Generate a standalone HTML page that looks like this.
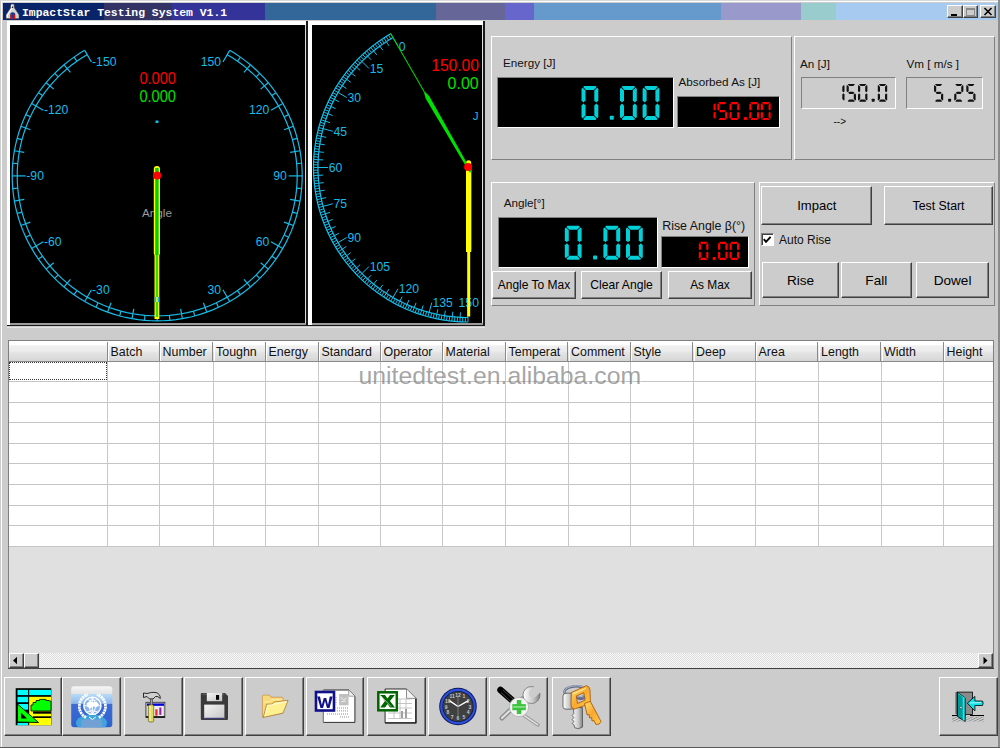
<!DOCTYPE html><html><head><meta charset="utf-8"><style>
html,body{margin:0;padding:0;width:1000px;height:748px;overflow:hidden;background:#cccccc;}
body{position:relative;font-family:"Liberation Sans",sans-serif;}
.a{position:absolute;}
.t{font-size:11.7px;color:#000;white-space:pre;line-height:1;}
</style></head><body>
<div class="a" style="left:0px;top:0px;width:1000px;height:748px;background:#cccccc;"></div>
<div class="a" style="left:0px;top:0px;width:1000px;height:1px;background:#d8d8d8;"></div>
<div class="a" style="left:1px;top:1px;width:998px;height:1px;background:#ffffff;"></div>
<div class="a" style="left:1px;top:1px;width:1px;height:746px;background:#ffffff;"></div>
<div class="a" style="left:998.4px;top:0px;width:1.6px;height:748px;background:#8c8c8c;"></div>
<div class="a" style="left:0px;top:746.6px;width:1000px;height:1.4px;background:#5a5a5a;"></div>
<div class="a" style="left:3px;top:3px;width:101px;height:17.3px;background:#0a246a;"></div>
<div class="a" style="left:104px;top:3px;width:68px;height:17.3px;background:#333366;"></div>
<div class="a" style="left:172px;top:3px;width:93px;height:17.3px;background:#333399;"></div>
<div class="a" style="left:265px;top:3px;width:171px;height:17.3px;background:#336699;"></div>
<div class="a" style="left:436px;top:3px;width:69px;height:17.3px;background:#666699;"></div>
<div class="a" style="left:505px;top:3px;width:29px;height:17.3px;background:#6666cc;"></div>
<div class="a" style="left:534px;top:3px;width:187px;height:17.3px;background:#6699cc;"></div>
<div class="a" style="left:721px;top:3px;width:80px;height:17.3px;background:#9999cc;"></div>
<div class="a" style="left:801px;top:3px;width:35px;height:17.3px;background:#99cccc;"></div>
<div class="a" style="left:836px;top:3px;width:162px;height:17.3px;background:#a6caf0;"></div>
<div class="a t" style="left:22px;top:6.2px;font-family:'Liberation Mono',monospace;font-weight:bold;font-size:11.4px;color:#fff;line-height:14px;">ImpactStar Testing System V1.1</div>
<svg class="a" style="left:0;top:0" width="30" height="22">
<path d="M11 4 L14 4 L14.5 8 L19 14.8 L19 18.6 L6 18.6 L6 14.8 L10.5 8 Z" fill="#d6d6d6" stroke="#404040" stroke-width="0.5"/>
<path d="M11.5 5 L11.8 8.5 L7.5 15 L7.5 17.5" fill="none" stroke="#ffffff" stroke-width="1"/>
<circle cx="12.5" cy="7.3" r="0.8" fill="#111"/>
<path d="M10.3 18.6 L10.3 13.5 Q12.7 10.8 15.2 13.5 L15.2 18.6 Z" fill="#1b3b8a"/>
<rect x="10.4" y="14.6" width="1.6" height="4.6" fill="#ee0000"/><rect x="13.5" y="14.6" width="1.6" height="4.6" fill="#ee0000"/>
<path d="M8 16 L9.8 16 M15.8 16 L17.5 16" stroke="#90d0d0" stroke-width="0.8"/>
</svg>
<div class="a" style="left:947px;top:5px;width:15.5px;height:13.3px;background:#cccccc;box-sizing:border-box;border-top:1px solid #fff;border-left:1px solid #fff;border-right:1px solid #404040;border-bottom:1px solid #404040;box-shadow:inset -1px -1px 0 #808080;"></div>
<div class="a" style="left:951px;top:13.5px;width:6px;height:2px;background:#000"></div>
<div class="a" style="left:962.8px;top:5px;width:15.3px;height:13.3px;background:#cccccc;box-sizing:border-box;border-top:1px solid #fff;border-left:1px solid #fff;border-right:1px solid #404040;border-bottom:1px solid #404040;box-shadow:inset -1px -1px 0 #808080;"></div>
<div class="a" style="left:966px;top:7.5px;width:9px;height:8px;box-sizing:border-box;border:1px solid #8a8a8a;border-top-width:2px;"></div>
<div class="a" style="left:980.2px;top:5px;width:15.6px;height:13.3px;background:#cccccc;box-sizing:border-box;border-top:1px solid #fff;border-left:1px solid #fff;border-right:1px solid #404040;border-bottom:1px solid #404040;box-shadow:inset -1px -1px 0 #808080;"></div>
<svg class="a" style="left:983px;top:7px" width="10" height="9"><path d="M1.5 1l7 7M8.5 1l-7 7" stroke="#000" stroke-width="1.6"/></svg>
<div class="a" style="left:7px;top:21px;width:301px;height:305px;background:#fff;"></div>
<div class="a" style="left:306px;top:21px;width:1.6px;height:305px;background:#1a1a1a;"></div>
<div class="a" style="left:7px;top:324.6px;width:301px;height:1.2px;background:#1a1a1a;"></div>
<div class="a" style="left:10px;top:25px;width:295px;height:298px;background:#000;"></div>
<div class="a" style="left:10px;top:323px;width:296px;height:1.6px;background:#9a9a9a;"></div>
<div class="a" style="left:305px;top:25px;width:1px;height:298px;background:#d8d8d8;"></div>
<div class="a" style="left:307.8px;top:21px;width:177px;height:305px;background:#fff;"></div>
<div class="a" style="left:312px;top:25px;width:170px;height:298px;background:#000;"></div>
<div class="a" style="left:482px;top:25px;width:1px;height:298px;background:#e0e0e0;"></div>
<div class="a" style="left:483px;top:21px;width:1.8px;height:305px;background:#1a1a1a;"></div>
<div class="a" style="left:312px;top:323px;width:171px;height:1.6px;background:#9a9a9a;"></div>
<div class="a" style="left:307.8px;top:324.6px;width:177px;height:1.2px;background:#1a1a1a;"></div>
<div class="a" style="left:7px;top:326.6px;width:478px;height:1.4px;background:#e4e4e4;"></div>
<svg class="a" style="left:0;top:0" width="1000" height="748"><clipPath id="c1"><rect x="10" y="25" width="295" height="298"/></clipPath><g clip-path="url(#c1)"><path d="M84.70,50.33 L79.29,53.61 L74.03,57.12 L68.93,60.86 L64.00,64.82 L59.24,68.99 L54.67,73.37 L50.29,77.94 L46.12,82.70 L42.16,87.63 L38.42,92.73 L34.91,97.99 L31.63,103.40 L28.58,108.95 L25.79,114.62 L23.24,120.41 L20.94,126.31 L18.91,132.30 L17.14,138.37 L15.64,144.52 L14.40,150.72 L13.44,156.97 L12.75,163.26 L12.34,169.58 L12.20,175.90 L12.34,182.22 L12.75,188.54 L13.44,194.83 L14.40,201.08 L15.64,207.28 L17.14,213.43 L18.91,219.50 L20.94,225.49 L23.24,231.39 L25.79,237.18 L28.58,242.85 L31.63,248.40 L34.91,253.81 L38.42,259.07 L42.16,264.17 L46.12,269.10 L50.29,273.86 L54.67,278.43 L59.24,282.81 L64.00,286.98 L68.93,290.94 L74.03,294.68 L79.29,298.19 L84.70,301.47 L90.25,304.52 L95.92,307.31 L101.71,309.86 L107.61,312.16 L113.60,314.19 L119.67,315.96 L125.82,317.46 L132.02,318.70 L138.27,319.66 L144.56,320.35 L150.88,320.76 L157.20,320.90 L163.52,320.76 L169.84,320.35 L176.13,319.66 L182.38,318.70 L188.58,317.46 L194.73,315.96 L200.80,314.19 L206.79,312.16 L212.69,309.86 L218.48,307.31 L224.15,304.52 L229.70,301.47 L235.11,298.19 L240.37,294.68 L245.47,290.94 L250.40,286.98 L255.16,282.81 L259.73,278.43 L264.11,273.86 L268.28,269.10 L272.24,264.17 L275.98,259.07 L279.49,253.81 L282.77,248.40 L285.82,242.85 L288.61,237.18 L291.16,231.39 L293.46,225.49 L295.49,219.50 L297.26,213.43 L298.76,207.28 L300.00,201.08 L300.96,194.83 L301.65,188.54 L302.06,182.22 L302.20,175.90 L302.06,169.58 L301.65,163.26 L300.96,156.97 L300.00,150.72 L298.76,144.52 L297.26,138.37 L295.49,132.30 L293.46,126.31 L291.16,120.41 L288.61,114.62 L285.82,108.95 L282.77,103.40 L279.49,97.99 L275.98,92.73 L272.24,87.63 L268.28,82.70 L264.11,77.94 L259.73,73.37 L255.16,68.99 L250.40,64.82 L245.47,60.86 L240.37,57.12 L235.11,53.61 L229.70,50.33" fill="none" stroke="#16bce8" stroke-width="1.2"/><path d="M87.20,54.66 L81.98,57.83 L76.90,61.22 L71.97,64.83 L67.21,68.65 L62.62,72.68 L58.21,76.91 L53.98,81.32 L49.95,85.91 L46.13,90.67 L42.52,95.60 L39.13,100.68 L35.96,105.90 L33.02,111.26 L30.32,116.73 L27.86,122.32 L25.64,128.02 L23.68,133.80 L21.97,139.67 L20.52,145.60 L19.33,151.59 L18.40,157.63 L17.73,163.70 L17.33,169.79 L17.20,175.90 L17.33,182.01 L17.73,188.10 L18.40,194.17 L19.33,200.21 L20.52,206.20 L21.97,212.13 L23.68,218.00 L25.64,223.78 L27.86,229.48 L30.32,235.07 L33.02,240.54 L35.96,245.90 L39.13,251.12 L42.52,256.20 L46.13,261.13 L49.95,265.89 L53.98,270.48 L58.21,274.89 L62.62,279.12 L67.21,283.15 L71.97,286.97 L76.90,290.58 L81.98,293.97 L87.20,297.14 L92.56,300.08 L98.03,302.78 L103.62,305.24 L109.32,307.46 L115.10,309.42 L120.97,311.13 L126.90,312.58 L132.89,313.77 L138.93,314.70 L145.00,315.37 L151.09,315.77 L157.20,315.90 L163.31,315.77 L169.40,315.37 L175.47,314.70 L181.51,313.77 L187.50,312.58 L193.43,311.13 L199.30,309.42 L205.08,307.46 L210.78,305.24 L216.37,302.78 L221.84,300.08 L227.20,297.14 L232.42,293.97 L237.50,290.58 L242.43,286.97 L247.19,283.15 L251.78,279.12 L256.19,274.89 L260.42,270.48 L264.45,265.89 L268.27,261.13 L271.88,256.20 L275.27,251.12 L278.44,245.90 L281.38,240.54 L284.08,235.07 L286.54,229.48 L288.76,223.78 L290.72,218.00 L292.43,212.13 L293.88,206.20 L295.07,200.21 L296.00,194.17 L296.67,188.10 L297.07,182.01 L297.20,175.90 L297.07,169.79 L296.67,163.70 L296.00,157.63 L295.07,151.59 L293.88,145.60 L292.43,139.67 L290.72,133.80 L288.76,128.02 L286.54,122.32 L284.08,116.73 L281.38,111.26 L278.44,105.90 L275.27,100.68 L271.88,95.60 L268.27,90.67 L264.45,85.91 L260.42,81.32 L256.19,76.91 L251.78,72.68 L247.19,68.65 L242.43,64.83 L237.50,61.22 L232.42,57.83 L227.20,54.66" fill="none" stroke="#16bce8" stroke-width="1.2"/><line x1="84.70" y1="50.33" x2="91.45" y2="62.02" stroke="#16bce8" stroke-width="1.2"/><text x="92.05" y="66.02" font-size="12.2" fill="#16bce8" font-family="Liberation Sans">-150</text><line x1="74.03" y1="57.12" x2="76.90" y2="61.22" stroke="#16bce8" stroke-width="1.2"/><line x1="64.00" y1="64.82" x2="70.42" y2="72.48" stroke="#16bce8" stroke-width="1.2"/><line x1="54.67" y1="73.37" x2="58.21" y2="76.91" stroke="#16bce8" stroke-width="1.2"/><line x1="46.12" y1="82.70" x2="53.78" y2="89.12" stroke="#16bce8" stroke-width="1.2"/><line x1="38.42" y1="92.73" x2="42.52" y2="95.60" stroke="#16bce8" stroke-width="1.2"/><line x1="31.63" y1="103.40" x2="43.32" y2="110.15" stroke="#16bce8" stroke-width="1.2"/><text x="43.92" y="114.15" font-size="12.2" fill="#16bce8" font-family="Liberation Sans">-120</text><line x1="25.79" y1="114.62" x2="30.32" y2="116.73" stroke="#16bce8" stroke-width="1.2"/><line x1="20.94" y1="126.31" x2="30.34" y2="129.73" stroke="#16bce8" stroke-width="1.2"/><line x1="17.14" y1="138.37" x2="21.97" y2="139.67" stroke="#16bce8" stroke-width="1.2"/><line x1="14.40" y1="150.72" x2="24.25" y2="152.46" stroke="#16bce8" stroke-width="1.2"/><line x1="12.75" y1="163.26" x2="17.73" y2="163.70" stroke="#16bce8" stroke-width="1.2"/><line x1="12.20" y1="175.90" x2="25.70" y2="175.90" stroke="#16bce8" stroke-width="1.2"/><text x="26.30" y="179.90" font-size="12.2" fill="#16bce8" font-family="Liberation Sans">-90</text><line x1="12.75" y1="188.54" x2="17.73" y2="188.10" stroke="#16bce8" stroke-width="1.2"/><line x1="14.40" y1="201.08" x2="24.25" y2="199.34" stroke="#16bce8" stroke-width="1.2"/><line x1="17.14" y1="213.43" x2="21.97" y2="212.13" stroke="#16bce8" stroke-width="1.2"/><line x1="20.94" y1="225.49" x2="30.34" y2="222.07" stroke="#16bce8" stroke-width="1.2"/><line x1="25.79" y1="237.18" x2="30.32" y2="235.07" stroke="#16bce8" stroke-width="1.2"/><line x1="31.63" y1="248.40" x2="43.32" y2="241.65" stroke="#16bce8" stroke-width="1.2"/><text x="43.92" y="245.65" font-size="12.2" fill="#16bce8" font-family="Liberation Sans">-60</text><line x1="38.42" y1="259.07" x2="42.52" y2="256.20" stroke="#16bce8" stroke-width="1.2"/><line x1="46.12" y1="269.10" x2="53.78" y2="262.68" stroke="#16bce8" stroke-width="1.2"/><line x1="54.67" y1="278.43" x2="58.21" y2="274.89" stroke="#16bce8" stroke-width="1.2"/><line x1="64.00" y1="286.98" x2="70.42" y2="279.32" stroke="#16bce8" stroke-width="1.2"/><line x1="74.03" y1="294.68" x2="76.90" y2="290.58" stroke="#16bce8" stroke-width="1.2"/><line x1="84.70" y1="301.47" x2="91.45" y2="289.78" stroke="#16bce8" stroke-width="1.2"/><text x="92.05" y="293.78" font-size="12.2" fill="#16bce8" font-family="Liberation Sans">-30</text><line x1="95.92" y1="307.31" x2="98.03" y2="302.78" stroke="#16bce8" stroke-width="1.2"/><line x1="107.61" y1="312.16" x2="111.03" y2="302.76" stroke="#16bce8" stroke-width="1.2"/><line x1="119.67" y1="315.96" x2="120.97" y2="311.13" stroke="#16bce8" stroke-width="1.2"/><line x1="132.02" y1="318.70" x2="133.76" y2="308.85" stroke="#16bce8" stroke-width="1.2"/><line x1="144.56" y1="320.35" x2="145.00" y2="315.37" stroke="#16bce8" stroke-width="1.2"/><line x1="157.20" y1="320.90" x2="157.20" y2="307.40" stroke="#16bce8" stroke-width="1.2"/><line x1="169.84" y1="320.35" x2="169.40" y2="315.37" stroke="#16bce8" stroke-width="1.2"/><line x1="182.38" y1="318.70" x2="180.64" y2="308.85" stroke="#16bce8" stroke-width="1.2"/><line x1="194.73" y1="315.96" x2="193.43" y2="311.13" stroke="#16bce8" stroke-width="1.2"/><line x1="206.79" y1="312.16" x2="203.37" y2="302.76" stroke="#16bce8" stroke-width="1.2"/><line x1="218.48" y1="307.31" x2="216.37" y2="302.78" stroke="#16bce8" stroke-width="1.2"/><line x1="229.70" y1="301.47" x2="222.95" y2="289.78" stroke="#16bce8" stroke-width="1.2"/><text x="221.15" y="293.78" font-size="12.2" fill="#16bce8" font-family="Liberation Sans" text-anchor="end">30</text><line x1="240.37" y1="294.68" x2="237.50" y2="290.58" stroke="#16bce8" stroke-width="1.2"/><line x1="250.40" y1="286.98" x2="243.98" y2="279.32" stroke="#16bce8" stroke-width="1.2"/><line x1="259.73" y1="278.43" x2="256.19" y2="274.89" stroke="#16bce8" stroke-width="1.2"/><line x1="268.28" y1="269.10" x2="260.62" y2="262.68" stroke="#16bce8" stroke-width="1.2"/><line x1="275.98" y1="259.07" x2="271.88" y2="256.20" stroke="#16bce8" stroke-width="1.2"/><line x1="282.77" y1="248.40" x2="271.08" y2="241.65" stroke="#16bce8" stroke-width="1.2"/><text x="269.28" y="245.65" font-size="12.2" fill="#16bce8" font-family="Liberation Sans" text-anchor="end">60</text><line x1="288.61" y1="237.18" x2="284.08" y2="235.07" stroke="#16bce8" stroke-width="1.2"/><line x1="293.46" y1="225.49" x2="284.06" y2="222.07" stroke="#16bce8" stroke-width="1.2"/><line x1="297.26" y1="213.43" x2="292.43" y2="212.13" stroke="#16bce8" stroke-width="1.2"/><line x1="300.00" y1="201.08" x2="290.15" y2="199.34" stroke="#16bce8" stroke-width="1.2"/><line x1="301.65" y1="188.54" x2="296.67" y2="188.10" stroke="#16bce8" stroke-width="1.2"/><line x1="302.20" y1="175.90" x2="288.70" y2="175.90" stroke="#16bce8" stroke-width="1.2"/><text x="286.90" y="179.90" font-size="12.2" fill="#16bce8" font-family="Liberation Sans" text-anchor="end">90</text><line x1="301.65" y1="163.26" x2="296.67" y2="163.70" stroke="#16bce8" stroke-width="1.2"/><line x1="300.00" y1="150.72" x2="290.15" y2="152.46" stroke="#16bce8" stroke-width="1.2"/><line x1="297.26" y1="138.37" x2="292.43" y2="139.67" stroke="#16bce8" stroke-width="1.2"/><line x1="293.46" y1="126.31" x2="284.06" y2="129.73" stroke="#16bce8" stroke-width="1.2"/><line x1="288.61" y1="114.62" x2="284.08" y2="116.73" stroke="#16bce8" stroke-width="1.2"/><line x1="282.77" y1="103.40" x2="271.08" y2="110.15" stroke="#16bce8" stroke-width="1.2"/><text x="269.28" y="114.15" font-size="12.2" fill="#16bce8" font-family="Liberation Sans" text-anchor="end">120</text><line x1="275.98" y1="92.73" x2="271.88" y2="95.60" stroke="#16bce8" stroke-width="1.2"/><line x1="268.28" y1="82.70" x2="260.62" y2="89.12" stroke="#16bce8" stroke-width="1.2"/><line x1="259.73" y1="73.37" x2="256.19" y2="76.91" stroke="#16bce8" stroke-width="1.2"/><line x1="250.40" y1="64.82" x2="243.98" y2="72.48" stroke="#16bce8" stroke-width="1.2"/><line x1="240.37" y1="57.12" x2="237.50" y2="61.22" stroke="#16bce8" stroke-width="1.2"/><line x1="229.70" y1="50.33" x2="222.95" y2="62.02" stroke="#16bce8" stroke-width="1.2"/><text x="221.15" y="66.02" font-size="12.2" fill="#16bce8" font-family="Liberation Sans" text-anchor="end">150</text><text x="139.4" y="84" font-size="15.6" fill="#ff0000" font-family="Liberation Sans" textLength="36.5" lengthAdjust="spacingAndGlyphs">0.000</text><text x="139.4" y="102" font-size="15.6" fill="#00e000" font-family="Liberation Sans" textLength="36.5" lengthAdjust="spacingAndGlyphs">0.000</text><rect x="155.5" y="120.5" width="3" height="2.5" fill="#16bce8"/><text x="157" y="217" font-size="11.7" fill="#9a9a9a" font-family="Liberation Sans" text-anchor="middle">Angle</text><rect x="153.8" y="166" width="6.2" height="90" rx="3" fill="#ffff00"/><rect x="155.2" y="168" width="3.4" height="88" fill="#00cc00"/><rect x="154.5" y="255" width="4.8" height="64" fill="#ffff00"/><rect x="155.7" y="255" width="2.4" height="62" fill="#33dd00"/><rect x="154.5" y="297" width="4.8" height="5" fill="#16bce8"/><rect x="156.2" y="297" width="1.4" height="5" fill="#ffff00"/><circle cx="157.2" cy="175.6" r="4" fill="#ff0000"/></g></svg>
<svg class="a" style="left:0;top:0" width="1000" height="748"><clipPath id="c2"><rect x="312" y="25" width="170" height="298"/></clipPath><g clip-path="url(#c2)"><path d="M390.75,33.70 L388.43,35.07 L386.13,36.48 L383.85,37.93 L381.60,39.41 L379.38,40.94 L377.19,42.51 L375.02,44.11 L372.88,45.75 L370.77,47.43 L368.69,49.15 L366.64,50.90 L364.62,52.68 L362.63,54.51 L360.68,56.36 L358.75,58.25 L356.86,60.18 L355.01,62.13 L353.18,64.12 L351.40,66.14 L349.65,68.19 L347.93,70.27 L346.25,72.38 L344.61,74.52 L343.01,76.69 L341.44,78.88 L339.91,81.10 L338.43,83.35 L336.98,85.63 L335.57,87.93 L334.20,90.25 L332.87,92.60 L331.58,94.97 L330.34,97.36 L329.14,99.77 L327.98,102.21 L326.86,104.66 L325.78,107.13 L324.75,109.62 L323.76,112.13 L322.82,114.66 L321.92,117.20 L321.06,119.76 L320.25,122.33 L319.49,124.91 L318.76,127.51 L318.09,130.12 L317.46,132.75 L316.88,135.38 L316.34,138.02 L315.85,140.67 L315.40,143.33 L315.00,146.00 L314.65,148.67 L314.35,151.35 L314.09,154.03 L313.88,156.72 L313.71,159.41 L313.59,162.11 L313.52,164.80 L313.50,167.50 L313.52,170.20 L313.59,172.89 L313.71,175.59 L313.88,178.28 L314.09,180.97 L314.35,183.65 L314.65,186.33 L315.00,189.00 L315.40,191.67 L315.85,194.33 L316.34,196.98 L316.88,199.62 L317.46,202.25 L318.09,204.88 L318.76,207.49 L319.49,210.09 L320.25,212.67 L321.06,215.24 L321.92,217.80 L322.82,220.34 L323.76,222.87 L324.75,225.38 L325.78,227.87 L326.86,230.34 L327.98,232.79 L329.14,235.23 L330.34,237.64 L331.58,240.03 L332.87,242.40 L334.20,244.75 L335.57,247.07 L336.98,249.37 L338.43,251.65 L339.91,253.90 L341.44,256.12 L343.01,258.31 L344.61,260.48 L346.25,262.62 L347.93,264.73 L349.65,266.81 L351.40,268.86 L353.18,270.88 L355.01,272.87 L356.86,274.82 L358.75,276.75 L360.68,278.64 L362.63,280.49 L364.62,282.32 L366.64,284.10 L368.69,285.85 L370.77,287.57 L372.88,289.25 L375.02,290.89 L377.19,292.49 L379.38,294.06 L381.60,295.59 L383.85,297.07 L386.13,298.52 L388.43,299.93 L390.75,301.30 L393.10,302.63 L395.47,303.92 L397.86,305.16 L400.27,306.36 L402.71,307.52 L405.16,308.64 L407.63,309.72 L410.12,310.75 L412.63,311.74 L415.16,312.68 L417.70,313.58 L420.26,314.44 L422.83,315.25 L425.41,316.01 L428.01,316.74 L430.62,317.41 L433.25,318.04 L435.88,318.62 L438.52,319.16 L441.17,319.65 L443.83,320.10 L446.50,320.50 L449.17,320.85 L451.85,321.15 L454.53,321.41 L457.22,321.62 L459.91,321.79 L462.61,321.91 L465.30,321.98 L468.00,322.00" fill="none" stroke="#16bce8" stroke-width="1.2"/><path d="M393.00,37.60 L390.74,38.92 L388.51,40.29 L386.30,41.70 L384.12,43.14 L381.96,44.63 L379.83,46.15 L377.73,47.70 L375.65,49.30 L373.60,50.93 L371.58,52.59 L369.59,54.29 L367.63,56.03 L365.70,57.80 L363.80,59.60 L361.93,61.43 L360.10,63.30 L358.30,65.20 L356.53,67.13 L354.79,69.09 L353.09,71.08 L351.43,73.10 L349.80,75.15 L348.20,77.23 L346.65,79.33 L345.13,81.46 L343.64,83.62 L342.20,85.80 L340.79,88.01 L339.42,90.24 L338.10,92.50 L336.81,94.78 L335.56,97.08 L334.35,99.40 L333.18,101.74 L332.05,104.11 L330.97,106.49 L329.92,108.89 L328.92,111.31 L327.96,113.74 L327.05,116.20 L326.17,118.66 L325.34,121.15 L324.55,123.64 L323.81,126.15 L323.11,128.68 L322.46,131.21 L321.84,133.76 L321.28,136.31 L320.76,138.88 L320.28,141.45 L319.85,144.03 L319.46,146.62 L319.12,149.22 L318.82,151.82 L318.57,154.43 L318.37,157.04 L318.21,159.65 L318.09,162.27 L318.02,164.88 L318.00,167.50 L318.02,170.12 L318.09,172.73 L318.21,175.35 L318.37,177.96 L318.57,180.57 L318.82,183.18 L319.12,185.78 L319.46,188.38 L319.85,190.97 L320.28,193.55 L320.76,196.12 L321.28,198.69 L321.84,201.24 L322.46,203.79 L323.11,206.32 L323.81,208.85 L324.55,211.36 L325.34,213.85 L326.17,216.34 L327.05,218.80 L327.96,221.26 L328.92,223.69 L329.92,226.11 L330.97,228.51 L332.05,230.89 L333.18,233.26 L334.35,235.60 L335.56,237.92 L336.81,240.22 L338.10,242.50 L339.42,244.76 L340.79,246.99 L342.20,249.20 L343.64,251.38 L345.13,253.54 L346.65,255.67 L348.20,257.77 L349.80,259.85 L351.43,261.90 L353.09,263.92 L354.79,265.91 L356.53,267.87 L358.30,269.80 L360.10,271.70 L361.93,273.57 L363.80,275.40 L365.70,277.20 L367.63,278.97 L369.59,280.71 L371.58,282.41 L373.60,284.07 L375.65,285.70 L377.73,287.30 L379.83,288.85 L381.96,290.37 L384.12,291.86 L386.30,293.30 L388.51,294.71 L390.74,296.08 L393.00,297.40 L395.28,298.69 L397.58,299.94 L399.90,301.15 L402.24,302.32 L404.61,303.45 L406.99,304.53 L409.39,305.58 L411.81,306.58 L414.24,307.54 L416.70,308.45 L419.16,309.33 L421.65,310.16 L424.14,310.95 L426.65,311.69 L429.18,312.39 L431.71,313.04 L434.26,313.66 L436.81,314.22 L439.38,314.74 L441.95,315.22 L444.53,315.65 L447.12,316.04 L449.72,316.38 L452.32,316.68 L454.93,316.93 L457.54,317.13 L460.15,317.29 L462.77,317.41 L465.38,317.48 L468.00,317.50" fill="none" stroke="#16bce8" stroke-width="1.2"/><line x1="390.75" y1="33.70" x2="398.00" y2="46.26" stroke="#16bce8" stroke-width="1"/><text x="398.80" y="50.56" font-size="12.2" fill="#16bce8" font-family="Liberation Sans">0</text><line x1="388.43" y1="35.07" x2="390.74" y2="38.92" stroke="#16bce8" stroke-width="1"/><line x1="386.13" y1="36.48" x2="388.51" y2="40.29" stroke="#16bce8" stroke-width="1"/><line x1="383.85" y1="37.93" x2="389.03" y2="45.89" stroke="#16bce8" stroke-width="1"/><line x1="381.60" y1="39.41" x2="384.12" y2="43.14" stroke="#16bce8" stroke-width="1"/><line x1="379.38" y1="40.94" x2="381.96" y2="44.63" stroke="#16bce8" stroke-width="1"/><line x1="377.19" y1="42.51" x2="382.77" y2="50.19" stroke="#16bce8" stroke-width="1"/><line x1="375.02" y1="44.11" x2="377.73" y2="47.70" stroke="#16bce8" stroke-width="1"/><line x1="372.88" y1="45.75" x2="375.65" y2="49.30" stroke="#16bce8" stroke-width="1"/><line x1="370.77" y1="47.43" x2="376.75" y2="54.81" stroke="#16bce8" stroke-width="1"/><line x1="368.69" y1="49.15" x2="371.58" y2="52.59" stroke="#16bce8" stroke-width="1"/><line x1="366.64" y1="50.90" x2="369.59" y2="54.29" stroke="#16bce8" stroke-width="1"/><line x1="364.62" y1="52.68" x2="370.98" y2="59.74" stroke="#16bce8" stroke-width="1"/><line x1="362.63" y1="54.51" x2="365.70" y2="57.80" stroke="#16bce8" stroke-width="1"/><line x1="360.68" y1="56.36" x2="363.80" y2="59.60" stroke="#16bce8" stroke-width="1"/><line x1="358.75" y1="58.25" x2="369.01" y2="68.51" stroke="#16bce8" stroke-width="1"/><text x="369.81" y="72.81" font-size="12.2" fill="#16bce8" font-family="Liberation Sans">15</text><line x1="356.86" y1="60.18" x2="360.10" y2="63.30" stroke="#16bce8" stroke-width="1"/><line x1="355.01" y1="62.13" x2="358.30" y2="65.20" stroke="#16bce8" stroke-width="1"/><line x1="353.18" y1="64.12" x2="360.24" y2="70.48" stroke="#16bce8" stroke-width="1"/><line x1="351.40" y1="66.14" x2="354.79" y2="69.09" stroke="#16bce8" stroke-width="1"/><line x1="349.65" y1="68.19" x2="353.09" y2="71.08" stroke="#16bce8" stroke-width="1"/><line x1="347.93" y1="70.27" x2="355.31" y2="76.25" stroke="#16bce8" stroke-width="1"/><line x1="346.25" y1="72.38" x2="349.80" y2="75.15" stroke="#16bce8" stroke-width="1"/><line x1="344.61" y1="74.52" x2="348.20" y2="77.23" stroke="#16bce8" stroke-width="1"/><line x1="343.01" y1="76.69" x2="350.69" y2="82.27" stroke="#16bce8" stroke-width="1"/><line x1="341.44" y1="78.88" x2="345.13" y2="81.46" stroke="#16bce8" stroke-width="1"/><line x1="339.91" y1="81.10" x2="343.64" y2="83.62" stroke="#16bce8" stroke-width="1"/><line x1="338.43" y1="83.35" x2="346.39" y2="88.53" stroke="#16bce8" stroke-width="1"/><line x1="336.98" y1="85.63" x2="340.79" y2="88.01" stroke="#16bce8" stroke-width="1"/><line x1="335.57" y1="87.93" x2="339.42" y2="90.24" stroke="#16bce8" stroke-width="1"/><line x1="334.20" y1="90.25" x2="346.76" y2="97.50" stroke="#16bce8" stroke-width="1"/><text x="347.56" y="101.80" font-size="12.2" fill="#16bce8" font-family="Liberation Sans">30</text><line x1="332.87" y1="92.60" x2="336.81" y2="94.78" stroke="#16bce8" stroke-width="1"/><line x1="331.58" y1="94.97" x2="335.56" y2="97.08" stroke="#16bce8" stroke-width="1"/><line x1="330.34" y1="97.36" x2="338.80" y2="101.67" stroke="#16bce8" stroke-width="1"/><line x1="329.14" y1="99.77" x2="333.18" y2="101.74" stroke="#16bce8" stroke-width="1"/><line x1="327.98" y1="102.21" x2="332.05" y2="104.11" stroke="#16bce8" stroke-width="1"/><line x1="326.86" y1="104.66" x2="335.54" y2="108.52" stroke="#16bce8" stroke-width="1"/><line x1="325.78" y1="107.13" x2="329.92" y2="108.89" stroke="#16bce8" stroke-width="1"/><line x1="324.75" y1="109.62" x2="328.92" y2="111.31" stroke="#16bce8" stroke-width="1"/><line x1="323.76" y1="112.13" x2="332.63" y2="115.54" stroke="#16bce8" stroke-width="1"/><line x1="322.82" y1="114.66" x2="327.05" y2="116.20" stroke="#16bce8" stroke-width="1"/><line x1="321.92" y1="117.20" x2="326.17" y2="118.66" stroke="#16bce8" stroke-width="1"/><line x1="321.06" y1="119.76" x2="330.10" y2="122.69" stroke="#16bce8" stroke-width="1"/><line x1="320.25" y1="122.33" x2="324.55" y2="123.64" stroke="#16bce8" stroke-width="1"/><line x1="319.49" y1="124.91" x2="323.81" y2="126.15" stroke="#16bce8" stroke-width="1"/><line x1="318.76" y1="127.51" x2="332.77" y2="131.27" stroke="#16bce8" stroke-width="1"/><text x="333.57" y="135.57" font-size="12.2" fill="#16bce8" font-family="Liberation Sans">45</text><line x1="318.09" y1="130.12" x2="322.46" y2="131.21" stroke="#16bce8" stroke-width="1"/><line x1="317.46" y1="132.75" x2="321.84" y2="133.76" stroke="#16bce8" stroke-width="1"/><line x1="316.88" y1="135.38" x2="326.17" y2="137.35" stroke="#16bce8" stroke-width="1"/><line x1="316.34" y1="138.02" x2="320.76" y2="138.88" stroke="#16bce8" stroke-width="1"/><line x1="315.85" y1="140.67" x2="320.28" y2="141.45" stroke="#16bce8" stroke-width="1"/><line x1="315.40" y1="143.33" x2="324.79" y2="144.82" stroke="#16bce8" stroke-width="1"/><line x1="315.00" y1="146.00" x2="319.46" y2="146.62" stroke="#16bce8" stroke-width="1"/><line x1="314.65" y1="148.67" x2="319.12" y2="149.22" stroke="#16bce8" stroke-width="1"/><line x1="314.35" y1="151.35" x2="323.79" y2="152.34" stroke="#16bce8" stroke-width="1"/><line x1="314.09" y1="154.03" x2="318.57" y2="154.43" stroke="#16bce8" stroke-width="1"/><line x1="313.88" y1="156.72" x2="318.37" y2="157.04" stroke="#16bce8" stroke-width="1"/><line x1="313.71" y1="159.41" x2="323.20" y2="159.91" stroke="#16bce8" stroke-width="1"/><line x1="313.59" y1="162.11" x2="318.09" y2="162.27" stroke="#16bce8" stroke-width="1"/><line x1="313.52" y1="164.80" x2="318.02" y2="164.88" stroke="#16bce8" stroke-width="1"/><line x1="313.50" y1="167.50" x2="328.00" y2="167.50" stroke="#16bce8" stroke-width="1"/><text x="328.80" y="171.80" font-size="12.2" fill="#16bce8" font-family="Liberation Sans">60</text><line x1="313.52" y1="170.20" x2="318.02" y2="170.12" stroke="#16bce8" stroke-width="1"/><line x1="313.59" y1="172.89" x2="318.09" y2="172.73" stroke="#16bce8" stroke-width="1"/><line x1="313.71" y1="175.59" x2="323.20" y2="175.09" stroke="#16bce8" stroke-width="1"/><line x1="313.88" y1="178.28" x2="318.37" y2="177.96" stroke="#16bce8" stroke-width="1"/><line x1="314.09" y1="180.97" x2="318.57" y2="180.57" stroke="#16bce8" stroke-width="1"/><line x1="314.35" y1="183.65" x2="323.79" y2="182.66" stroke="#16bce8" stroke-width="1"/><line x1="314.65" y1="186.33" x2="319.12" y2="185.78" stroke="#16bce8" stroke-width="1"/><line x1="315.00" y1="189.00" x2="319.46" y2="188.38" stroke="#16bce8" stroke-width="1"/><line x1="315.40" y1="191.67" x2="324.79" y2="190.18" stroke="#16bce8" stroke-width="1"/><line x1="315.85" y1="194.33" x2="320.28" y2="193.55" stroke="#16bce8" stroke-width="1"/><line x1="316.34" y1="196.98" x2="320.76" y2="196.12" stroke="#16bce8" stroke-width="1"/><line x1="316.88" y1="199.62" x2="326.17" y2="197.65" stroke="#16bce8" stroke-width="1"/><line x1="317.46" y1="202.25" x2="321.84" y2="201.24" stroke="#16bce8" stroke-width="1"/><line x1="318.09" y1="204.88" x2="322.46" y2="203.79" stroke="#16bce8" stroke-width="1"/><line x1="318.76" y1="207.49" x2="332.77" y2="203.73" stroke="#16bce8" stroke-width="1"/><text x="333.57" y="208.03" font-size="12.2" fill="#16bce8" font-family="Liberation Sans">75</text><line x1="319.49" y1="210.09" x2="323.81" y2="208.85" stroke="#16bce8" stroke-width="1"/><line x1="320.25" y1="212.67" x2="324.55" y2="211.36" stroke="#16bce8" stroke-width="1"/><line x1="321.06" y1="215.24" x2="330.10" y2="212.31" stroke="#16bce8" stroke-width="1"/><line x1="321.92" y1="217.80" x2="326.17" y2="216.34" stroke="#16bce8" stroke-width="1"/><line x1="322.82" y1="220.34" x2="327.05" y2="218.80" stroke="#16bce8" stroke-width="1"/><line x1="323.76" y1="222.87" x2="332.63" y2="219.46" stroke="#16bce8" stroke-width="1"/><line x1="324.75" y1="225.38" x2="328.92" y2="223.69" stroke="#16bce8" stroke-width="1"/><line x1="325.78" y1="227.87" x2="329.92" y2="226.11" stroke="#16bce8" stroke-width="1"/><line x1="326.86" y1="230.34" x2="335.54" y2="226.48" stroke="#16bce8" stroke-width="1"/><line x1="327.98" y1="232.79" x2="332.05" y2="230.89" stroke="#16bce8" stroke-width="1"/><line x1="329.14" y1="235.23" x2="333.18" y2="233.26" stroke="#16bce8" stroke-width="1"/><line x1="330.34" y1="237.64" x2="338.80" y2="233.33" stroke="#16bce8" stroke-width="1"/><line x1="331.58" y1="240.03" x2="335.56" y2="237.92" stroke="#16bce8" stroke-width="1"/><line x1="332.87" y1="242.40" x2="336.81" y2="240.22" stroke="#16bce8" stroke-width="1"/><line x1="334.20" y1="244.75" x2="346.76" y2="237.50" stroke="#16bce8" stroke-width="1"/><text x="347.56" y="241.80" font-size="12.2" fill="#16bce8" font-family="Liberation Sans">90</text><line x1="335.57" y1="247.07" x2="339.42" y2="244.76" stroke="#16bce8" stroke-width="1"/><line x1="336.98" y1="249.37" x2="340.79" y2="246.99" stroke="#16bce8" stroke-width="1"/><line x1="338.43" y1="251.65" x2="346.39" y2="246.47" stroke="#16bce8" stroke-width="1"/><line x1="339.91" y1="253.90" x2="343.64" y2="251.38" stroke="#16bce8" stroke-width="1"/><line x1="341.44" y1="256.12" x2="345.13" y2="253.54" stroke="#16bce8" stroke-width="1"/><line x1="343.01" y1="258.31" x2="350.69" y2="252.73" stroke="#16bce8" stroke-width="1"/><line x1="344.61" y1="260.48" x2="348.20" y2="257.77" stroke="#16bce8" stroke-width="1"/><line x1="346.25" y1="262.62" x2="349.80" y2="259.85" stroke="#16bce8" stroke-width="1"/><line x1="347.93" y1="264.73" x2="355.31" y2="258.75" stroke="#16bce8" stroke-width="1"/><line x1="349.65" y1="266.81" x2="353.09" y2="263.92" stroke="#16bce8" stroke-width="1"/><line x1="351.40" y1="268.86" x2="354.79" y2="265.91" stroke="#16bce8" stroke-width="1"/><line x1="353.18" y1="270.88" x2="360.24" y2="264.52" stroke="#16bce8" stroke-width="1"/><line x1="355.01" y1="272.87" x2="358.30" y2="269.80" stroke="#16bce8" stroke-width="1"/><line x1="356.86" y1="274.82" x2="360.10" y2="271.70" stroke="#16bce8" stroke-width="1"/><line x1="358.75" y1="276.75" x2="369.01" y2="266.49" stroke="#16bce8" stroke-width="1"/><text x="369.81" y="270.79" font-size="12.2" fill="#16bce8" font-family="Liberation Sans">105</text><line x1="360.68" y1="278.64" x2="363.80" y2="275.40" stroke="#16bce8" stroke-width="1"/><line x1="362.63" y1="280.49" x2="365.70" y2="277.20" stroke="#16bce8" stroke-width="1"/><line x1="364.62" y1="282.32" x2="370.98" y2="275.26" stroke="#16bce8" stroke-width="1"/><line x1="366.64" y1="284.10" x2="369.59" y2="280.71" stroke="#16bce8" stroke-width="1"/><line x1="368.69" y1="285.85" x2="371.58" y2="282.41" stroke="#16bce8" stroke-width="1"/><line x1="370.77" y1="287.57" x2="376.75" y2="280.19" stroke="#16bce8" stroke-width="1"/><line x1="372.88" y1="289.25" x2="375.65" y2="285.70" stroke="#16bce8" stroke-width="1"/><line x1="375.02" y1="290.89" x2="377.73" y2="287.30" stroke="#16bce8" stroke-width="1"/><line x1="377.19" y1="292.49" x2="382.77" y2="284.81" stroke="#16bce8" stroke-width="1"/><line x1="379.38" y1="294.06" x2="381.96" y2="290.37" stroke="#16bce8" stroke-width="1"/><line x1="381.60" y1="295.59" x2="384.12" y2="291.86" stroke="#16bce8" stroke-width="1"/><line x1="383.85" y1="297.07" x2="389.03" y2="289.11" stroke="#16bce8" stroke-width="1"/><line x1="386.13" y1="298.52" x2="388.51" y2="294.71" stroke="#16bce8" stroke-width="1"/><line x1="388.43" y1="299.93" x2="390.74" y2="296.08" stroke="#16bce8" stroke-width="1"/><line x1="390.75" y1="301.30" x2="398.00" y2="288.74" stroke="#16bce8" stroke-width="1"/><text x="398.80" y="293.04" font-size="12.2" fill="#16bce8" font-family="Liberation Sans">120</text><line x1="393.10" y1="302.63" x2="395.28" y2="298.69" stroke="#16bce8" stroke-width="1"/><line x1="395.47" y1="303.92" x2="397.58" y2="299.94" stroke="#16bce8" stroke-width="1"/><line x1="397.86" y1="305.16" x2="402.17" y2="296.70" stroke="#16bce8" stroke-width="1"/><line x1="400.27" y1="306.36" x2="402.24" y2="302.32" stroke="#16bce8" stroke-width="1"/><line x1="402.71" y1="307.52" x2="404.61" y2="303.45" stroke="#16bce8" stroke-width="1"/><line x1="405.16" y1="308.64" x2="409.02" y2="299.96" stroke="#16bce8" stroke-width="1"/><line x1="407.63" y1="309.72" x2="409.39" y2="305.58" stroke="#16bce8" stroke-width="1"/><line x1="410.12" y1="310.75" x2="411.81" y2="306.58" stroke="#16bce8" stroke-width="1"/><line x1="412.63" y1="311.74" x2="416.04" y2="302.87" stroke="#16bce8" stroke-width="1"/><line x1="415.16" y1="312.68" x2="416.70" y2="308.45" stroke="#16bce8" stroke-width="1"/><line x1="417.70" y1="313.58" x2="419.16" y2="309.33" stroke="#16bce8" stroke-width="1"/><line x1="420.26" y1="314.44" x2="423.19" y2="305.40" stroke="#16bce8" stroke-width="1"/><line x1="422.83" y1="315.25" x2="424.14" y2="310.95" stroke="#16bce8" stroke-width="1"/><line x1="425.41" y1="316.01" x2="426.65" y2="311.69" stroke="#16bce8" stroke-width="1"/><line x1="428.01" y1="316.74" x2="431.77" y2="302.73" stroke="#16bce8" stroke-width="1"/><text x="432.57" y="307.03" font-size="12.2" fill="#16bce8" font-family="Liberation Sans">135</text><line x1="430.62" y1="317.41" x2="431.71" y2="313.04" stroke="#16bce8" stroke-width="1"/><line x1="433.25" y1="318.04" x2="434.26" y2="313.66" stroke="#16bce8" stroke-width="1"/><line x1="435.88" y1="318.62" x2="437.85" y2="309.33" stroke="#16bce8" stroke-width="1"/><line x1="438.52" y1="319.16" x2="439.38" y2="314.74" stroke="#16bce8" stroke-width="1"/><line x1="441.17" y1="319.65" x2="441.95" y2="315.22" stroke="#16bce8" stroke-width="1"/><line x1="443.83" y1="320.10" x2="445.32" y2="310.71" stroke="#16bce8" stroke-width="1"/><line x1="446.50" y1="320.50" x2="447.12" y2="316.04" stroke="#16bce8" stroke-width="1"/><line x1="449.17" y1="320.85" x2="449.72" y2="316.38" stroke="#16bce8" stroke-width="1"/><line x1="451.85" y1="321.15" x2="452.84" y2="311.71" stroke="#16bce8" stroke-width="1"/><line x1="454.53" y1="321.41" x2="454.93" y2="316.93" stroke="#16bce8" stroke-width="1"/><line x1="457.22" y1="321.62" x2="457.54" y2="317.13" stroke="#16bce8" stroke-width="1"/><line x1="459.91" y1="321.79" x2="460.41" y2="312.30" stroke="#16bce8" stroke-width="1"/><line x1="462.61" y1="321.91" x2="462.77" y2="317.41" stroke="#16bce8" stroke-width="1"/><line x1="465.30" y1="321.98" x2="465.38" y2="317.48" stroke="#16bce8" stroke-width="1"/><line x1="468.00" y1="322.00" x2="468.00" y2="307.50" stroke="#16bce8" stroke-width="1"/><text x="458.60" y="306.80" font-size="12.2" fill="#16bce8" font-family="Liberation Sans">150</text><rect x="466" y="160.2" width="5.2" height="92" rx="2.6" fill="#ffff00"/><rect x="466" y="166" width="5.2" height="86" fill="#ffff00"/><rect x="467.2" y="250" width="3" height="66.5" fill="#ffff00"/><line x1="390.50" y1="33.27" x2="424.50" y2="92.16" stroke="#00d000" stroke-width="1.1"/><polygon points="423.98,92.46 425.68,98.40 469.71,172.86 471.79,171.66 429.32,96.30 425.02,91.86" fill="#00e000"/><circle cx="468.1" cy="166.9" r="4" fill="#ff0000"/><text x="431.2" y="71.2" font-size="16.2" fill="#ff0000" font-family="Liberation Sans" textLength="47.8" lengthAdjust="spacingAndGlyphs">150.00</text><text x="447.5" y="88.8" font-size="15.8" fill="#00e000" font-family="Liberation Sans" textLength="31.3" lengthAdjust="spacingAndGlyphs">0.00</text><text x="478.5" y="120" font-size="11.7" fill="#16bce8" font-family="Liberation Sans" text-anchor="end">J</text></g></svg>
<div class="a" style="left:491px;top:36px;width:301px;height:124px;box-sizing:border-box;border-top:1px solid #fff;border-left:1px solid #fff;border-right:1px solid #808080;border-bottom:1px solid #808080;"></div>
<div class="a t" style="left:503px;top:57.3px;color:#111">Energy [J]</div>
<div class="a" style="left:496.5px;top:77px;width:177px;height:51px;background:#000;box-sizing:border-box;border-top:1px solid #808080;border-left:1px solid #808080;border-right:1.5px solid #fff;border-bottom:1.5px solid #fff;"></div>
<div class="a t" style="left:678.5px;top:76.3px;color:#111">Absorbed As [J]</div>
<div class="a" style="left:676.5px;top:96px;width:103px;height:32px;background:#000;box-sizing:border-box;border-top:1px solid #808080;border-left:1px solid #808080;border-right:1.5px solid #fff;border-bottom:1.5px solid #fff;"></div>
<svg class="a" style="left:0;top:0" width="1000" height="748"><polygon points="584.25,86.00 595.55,86.00 596.65,87.10 593.75,90.00 586.05,90.00 583.15,87.10" fill="#00d0d8"/><polygon points="598.30,88.75 597.20,87.65 594.30,90.55 594.30,100.45 596.30,102.45 598.30,100.45" fill="#00d0d8"/><polygon points="596.30,103.55 594.30,105.55 594.30,115.45 597.20,118.35 598.30,117.25 598.30,105.55" fill="#00d0d8"/><polygon points="586.05,116.00 593.75,116.00 596.65,118.90 595.55,120.00 584.25,120.00 583.15,118.90" fill="#00d0d8"/><polygon points="583.50,103.55 585.50,105.55 585.50,115.45 582.60,118.35 581.50,117.25 581.50,105.55" fill="#00d0d8"/><polygon points="581.50,88.75 582.60,87.65 585.50,90.55 585.50,100.45 583.50,102.45 581.50,100.45" fill="#00d0d8"/><polygon points="622.75,86.00 634.05,86.00 635.15,87.10 632.25,90.00 624.55,90.00 621.65,87.10" fill="#00d0d8"/><polygon points="636.80,88.75 635.70,87.65 632.80,90.55 632.80,100.45 634.80,102.45 636.80,100.45" fill="#00d0d8"/><polygon points="634.80,103.55 632.80,105.55 632.80,115.45 635.70,118.35 636.80,117.25 636.80,105.55" fill="#00d0d8"/><polygon points="624.55,116.00 632.25,116.00 635.15,118.90 634.05,120.00 622.75,120.00 621.65,118.90" fill="#00d0d8"/><polygon points="622.00,103.55 624.00,105.55 624.00,115.45 621.10,118.35 620.00,117.25 620.00,105.55" fill="#00d0d8"/><polygon points="620.00,88.75 621.10,87.65 624.00,90.55 624.00,100.45 622.00,102.45 620.00,100.45" fill="#00d0d8"/><polygon points="645.35,86.00 656.65,86.00 657.75,87.10 654.85,90.00 647.15,90.00 644.25,87.10" fill="#00d0d8"/><polygon points="659.40,88.75 658.30,87.65 655.40,90.55 655.40,100.45 657.40,102.45 659.40,100.45" fill="#00d0d8"/><polygon points="657.40,103.55 655.40,105.55 655.40,115.45 658.30,118.35 659.40,117.25 659.40,105.55" fill="#00d0d8"/><polygon points="647.15,116.00 654.85,116.00 657.75,118.90 656.65,120.00 645.35,120.00 644.25,118.90" fill="#00d0d8"/><polygon points="644.60,103.55 646.60,105.55 646.60,115.45 643.70,118.35 642.60,117.25 642.60,105.55" fill="#00d0d8"/><polygon points="642.60,88.75 643.70,87.65 646.60,90.55 646.60,100.45 644.60,102.45 642.60,100.45" fill="#00d0d8"/><rect x="609.8" y="115.8" width="4" height="4" rx="0.8" fill="#00d0d8"/></svg>
<svg class="a" style="left:0;top:0" width="1000" height="748"><polygon points="715.70,103.86 715.09,103.25 713.50,104.85 713.50,109.45 714.60,110.55 715.70,109.45" fill="#ff0000"/><polygon points="714.60,111.65 713.50,112.75 713.50,117.35 715.09,118.94 715.70,118.34 715.70,112.75" fill="#ff0000"/><polygon points="719.16,102.10 725.54,102.10 726.14,102.70 724.55,104.30 720.15,104.30 718.55,102.70" fill="#ff0000"/><polygon points="717.40,103.86 718.00,103.25 719.60,104.85 719.60,109.45 718.50,110.55 717.40,109.45" fill="#ff0000"/><polygon points="719.05,111.10 720.15,110.00 724.55,110.00 725.65,111.10 724.55,112.20 720.15,112.20" fill="#ff0000"/><polygon points="726.20,111.65 725.10,112.75 725.10,117.35 726.69,118.94 727.30,118.34 727.30,112.75" fill="#ff0000"/><polygon points="720.15,117.90 724.55,117.90 726.14,119.49 725.54,120.10 719.16,120.10 718.55,119.49" fill="#ff0000"/><polygon points="731.26,102.10 737.64,102.10 738.25,102.70 736.65,104.30 732.25,104.30 730.65,102.70" fill="#ff0000"/><polygon points="739.40,103.86 738.79,103.25 737.20,104.85 737.20,109.45 738.30,110.55 739.40,109.45" fill="#ff0000"/><polygon points="738.30,111.65 737.20,112.75 737.20,117.35 738.79,118.94 739.40,118.34 739.40,112.75" fill="#ff0000"/><polygon points="732.25,117.90 736.65,117.90 738.25,119.49 737.64,120.10 731.26,120.10 730.65,119.49" fill="#ff0000"/><polygon points="730.60,111.65 731.70,112.75 731.70,117.35 730.11,118.94 729.50,118.34 729.50,112.75" fill="#ff0000"/><polygon points="729.50,103.86 730.11,103.25 731.70,104.85 731.70,109.45 730.60,110.55 729.50,109.45" fill="#ff0000"/><polygon points="751.06,102.10 757.44,102.10 758.04,102.70 756.45,104.30 752.05,104.30 750.45,102.70" fill="#ff0000"/><polygon points="759.20,103.86 758.59,103.25 757.00,104.85 757.00,109.45 758.10,110.55 759.20,109.45" fill="#ff0000"/><polygon points="758.10,111.65 757.00,112.75 757.00,117.35 758.59,118.94 759.20,118.34 759.20,112.75" fill="#ff0000"/><polygon points="752.05,117.90 756.45,117.90 758.04,119.49 757.44,120.10 751.06,120.10 750.45,119.49" fill="#ff0000"/><polygon points="750.40,111.65 751.50,112.75 751.50,117.35 749.90,118.94 749.30,118.34 749.30,112.75" fill="#ff0000"/><polygon points="749.30,103.86 749.90,103.25 751.50,104.85 751.50,109.45 750.40,110.55 749.30,109.45" fill="#ff0000"/><polygon points="762.56,102.10 768.94,102.10 769.54,102.70 767.95,104.30 763.55,104.30 761.95,102.70" fill="#ff0000"/><polygon points="770.70,103.86 770.09,103.25 768.50,104.85 768.50,109.45 769.60,110.55 770.70,109.45" fill="#ff0000"/><polygon points="769.60,111.65 768.50,112.75 768.50,117.35 770.09,118.94 770.70,118.34 770.70,112.75" fill="#ff0000"/><polygon points="763.55,117.90 767.95,117.90 769.54,119.49 768.94,120.10 762.56,120.10 761.95,119.49" fill="#ff0000"/><polygon points="761.90,111.65 763.00,112.75 763.00,117.35 761.40,118.94 760.80,118.34 760.80,112.75" fill="#ff0000"/><polygon points="760.80,103.86 761.40,103.25 763.00,104.85 763.00,109.45 761.90,110.55 760.80,109.45" fill="#ff0000"/><rect x="744.0" y="117.1" width="3.0" height="3.0" rx="0.6000000000000001" fill="#ff0000"/></svg>
<div class="a" style="left:794px;top:36px;width:201px;height:124px;box-sizing:border-box;border-top:1px solid #fff;border-left:1px solid #fff;border-right:1px solid #808080;border-bottom:1px solid #808080;"></div>
<div class="a t" style="left:800px;top:58px;color:#111">An [J]</div>
<div class="a t" style="left:906.5px;top:58px;color:#111">Vm [ m/s ]</div>
<div class="a" style="left:800.5px;top:76.8px;width:95.5px;height:32.2px;background:#cccccc;box-sizing:border-box;border-top:1px solid #808080;border-left:1px solid #808080;border-right:1.5px solid #fff;border-bottom:1.5px solid #fff;"></div>
<div class="a" style="left:906.2px;top:76.8px;width:76.5px;height:32.2px;background:#cccccc;box-sizing:border-box;border-top:1px solid #808080;border-left:1px solid #808080;border-right:1.5px solid #fff;border-bottom:1.5px solid #fff;"></div>
<svg class="a" style="left:0;top:0" width="1000" height="748"><polygon points="844.50,85.66 843.89,85.06 842.30,86.65 842.30,91.15 843.40,92.25 844.50,91.15" fill="#111"/><polygon points="843.40,93.35 842.30,94.45 842.30,98.95 843.89,100.55 844.50,99.94 844.50,94.45" fill="#111"/><polygon points="848.36,83.90 854.24,83.90 854.85,84.51 853.25,86.10 849.35,86.10 847.75,84.51" fill="#111"/><polygon points="846.60,85.66 847.21,85.06 848.80,86.65 848.80,91.15 847.70,92.25 846.60,91.15" fill="#111"/><polygon points="848.25,92.80 849.35,91.70 853.25,91.70 854.35,92.80 853.25,93.90 849.35,93.90" fill="#111"/><polygon points="854.90,93.35 853.80,94.45 853.80,98.95 855.39,100.55 856.00,99.94 856.00,94.45" fill="#111"/><polygon points="849.35,99.50 853.25,99.50 854.85,101.09 854.24,101.70 848.36,101.70 847.75,101.09" fill="#111"/><polygon points="859.76,83.90 865.64,83.90 866.25,84.51 864.65,86.10 860.75,86.10 859.15,84.51" fill="#111"/><polygon points="867.40,85.66 866.79,85.06 865.20,86.65 865.20,91.15 866.30,92.25 867.40,91.15" fill="#111"/><polygon points="866.30,93.35 865.20,94.45 865.20,98.95 866.79,100.55 867.40,99.94 867.40,94.45" fill="#111"/><polygon points="860.75,99.50 864.65,99.50 866.25,101.09 865.64,101.70 859.76,101.70 859.15,101.09" fill="#111"/><polygon points="859.10,93.35 860.20,94.45 860.20,98.95 858.61,100.55 858.00,99.94 858.00,94.45" fill="#111"/><polygon points="858.00,85.66 858.61,85.06 860.20,86.65 860.20,91.15 859.10,92.25 858.00,91.15" fill="#111"/><polygon points="879.56,83.90 885.44,83.90 886.04,84.51 884.45,86.10 880.55,86.10 878.95,84.51" fill="#111"/><polygon points="887.20,85.66 886.59,85.06 885.00,86.65 885.00,91.15 886.10,92.25 887.20,91.15" fill="#111"/><polygon points="886.10,93.35 885.00,94.45 885.00,98.95 886.59,100.55 887.20,99.94 887.20,94.45" fill="#111"/><polygon points="880.55,99.50 884.45,99.50 886.04,101.09 885.44,101.70 879.56,101.70 878.95,101.09" fill="#111"/><polygon points="878.90,93.35 880.00,94.45 880.00,98.95 878.40,100.55 877.80,99.94 877.80,94.45" fill="#111"/><polygon points="877.80,85.66 878.40,85.06 880.00,86.65 880.00,91.15 878.90,92.25 877.80,91.15" fill="#111"/><rect x="871.7" y="98.7" width="3.0" height="3.0" rx="0.6000000000000001" fill="#111"/></svg>
<svg class="a" style="left:0;top:0" width="1000" height="748"><polygon points="935.76,83.90 941.44,83.90 942.05,84.51 940.45,86.10 936.75,86.10 935.15,84.51" fill="#111"/><polygon points="934.00,85.66 934.61,85.06 936.20,86.65 936.20,91.15 935.10,92.25 934.00,91.15" fill="#111"/><polygon points="935.65,92.80 936.75,91.70 940.45,91.70 941.55,92.80 940.45,93.90 936.75,93.90" fill="#111"/><polygon points="942.10,93.35 941.00,94.45 941.00,98.95 942.60,100.55 943.20,99.94 943.20,94.45" fill="#111"/><polygon points="936.75,99.50 940.45,99.50 942.05,101.09 941.44,101.70 935.76,101.70 935.15,101.09" fill="#111"/><polygon points="955.96,83.90 961.64,83.90 962.25,84.51 960.65,86.10 956.95,86.10 955.36,84.51" fill="#111"/><polygon points="963.40,85.66 962.80,85.06 961.20,86.65 961.20,91.15 962.30,92.25 963.40,91.15" fill="#111"/><polygon points="955.85,92.80 956.95,91.70 960.65,91.70 961.75,92.80 960.65,93.90 956.95,93.90" fill="#111"/><polygon points="955.30,93.35 956.40,94.45 956.40,98.95 954.81,100.55 954.20,99.94 954.20,94.45" fill="#111"/><polygon points="956.95,99.50 960.65,99.50 962.25,101.09 961.64,101.70 955.96,101.70 955.36,101.09" fill="#111"/><polygon points="968.06,83.90 973.74,83.90 974.35,84.51 972.75,86.10 969.05,86.10 967.45,84.51" fill="#111"/><polygon points="966.30,85.66 966.90,85.06 968.50,86.65 968.50,91.15 967.40,92.25 966.30,91.15" fill="#111"/><polygon points="967.95,92.80 969.05,91.70 972.75,91.70 973.85,92.80 972.75,93.90 969.05,93.90" fill="#111"/><polygon points="974.40,93.35 973.30,94.45 973.30,98.95 974.89,100.55 975.50,99.94 975.50,94.45" fill="#111"/><polygon points="969.05,99.50 972.75,99.50 974.35,101.09 973.74,101.70 968.06,101.70 967.45,101.09" fill="#111"/><rect x="948.1" y="98.7" width="3.0" height="3.0" rx="0.6000000000000001" fill="#111"/></svg>
<div class="a t" style="left:833.5px;top:117px;color:#111;font-size:10px">--></div>
<div class="a" style="left:491px;top:182px;width:264px;height:123.5px;box-sizing:border-box;border-top:1px solid #fff;border-left:1px solid #fff;border-right:1px solid #808080;border-bottom:1px solid #808080;"></div>
<div class="a t" style="left:503.7px;top:197.3px;color:#111">Angle[°]</div>
<div class="a" style="left:497.6px;top:217.4px;width:160px;height:51px;background:#000;box-sizing:border-box;border-top:1px solid #808080;border-left:1px solid #808080;border-right:1.5px solid #fff;border-bottom:1.5px solid #fff;"></div>
<div class="a t" style="left:662.2px;top:219.8px;color:#111;font-size:12.4px">Rise Angle β(°)</div>
<div class="a" style="left:661px;top:235.5px;width:87.5px;height:32.5px;background:#000;box-sizing:border-box;border-top:1px solid #808080;border-left:1px solid #808080;border-right:1.5px solid #fff;border-bottom:1.5px solid #fff;"></div>
<svg class="a" style="left:0;top:0" width="1000" height="748"><polygon points="567.55,225.80 578.85,225.80 579.95,226.90 577.05,229.80 569.35,229.80 566.45,226.90" fill="#00d0d8"/><polygon points="581.60,228.55 580.50,227.45 577.60,230.35 577.60,240.25 579.60,242.25 581.60,240.25" fill="#00d0d8"/><polygon points="579.60,243.35 577.60,245.35 577.60,255.25 580.50,258.15 581.60,257.05 581.60,245.35" fill="#00d0d8"/><polygon points="569.35,255.80 577.05,255.80 579.95,258.70 578.85,259.80 567.55,259.80 566.45,258.70" fill="#00d0d8"/><polygon points="566.80,243.35 568.80,245.35 568.80,255.25 565.90,258.15 564.80,257.05 564.80,245.35" fill="#00d0d8"/><polygon points="564.80,228.55 565.90,227.45 568.80,230.35 568.80,240.25 566.80,242.25 564.80,240.25" fill="#00d0d8"/><polygon points="606.15,225.80 617.45,225.80 618.55,226.90 615.65,229.80 607.95,229.80 605.05,226.90" fill="#00d0d8"/><polygon points="620.20,228.55 619.10,227.45 616.20,230.35 616.20,240.25 618.20,242.25 620.20,240.25" fill="#00d0d8"/><polygon points="618.20,243.35 616.20,245.35 616.20,255.25 619.10,258.15 620.20,257.05 620.20,245.35" fill="#00d0d8"/><polygon points="607.95,255.80 615.65,255.80 618.55,258.70 617.45,259.80 606.15,259.80 605.05,258.70" fill="#00d0d8"/><polygon points="605.40,243.35 607.40,245.35 607.40,255.25 604.50,258.15 603.40,257.05 603.40,245.35" fill="#00d0d8"/><polygon points="603.40,228.55 604.50,227.45 607.40,230.35 607.40,240.25 605.40,242.25 603.40,240.25" fill="#00d0d8"/><polygon points="628.75,225.80 640.05,225.80 641.15,226.90 638.25,229.80 630.55,229.80 627.65,226.90" fill="#00d0d8"/><polygon points="642.80,228.55 641.70,227.45 638.80,230.35 638.80,240.25 640.80,242.25 642.80,240.25" fill="#00d0d8"/><polygon points="640.80,243.35 638.80,245.35 638.80,255.25 641.70,258.15 642.80,257.05 642.80,245.35" fill="#00d0d8"/><polygon points="630.55,255.80 638.25,255.80 641.15,258.70 640.05,259.80 628.75,259.80 627.65,258.70" fill="#00d0d8"/><polygon points="628.00,243.35 630.00,245.35 630.00,255.25 627.10,258.15 626.00,257.05 626.00,245.35" fill="#00d0d8"/><polygon points="626.00,228.55 627.10,227.45 630.00,230.35 630.00,240.25 628.00,242.25 626.00,240.25" fill="#00d0d8"/><rect x="593.1" y="255.60000000000002" width="4" height="4" rx="0.8" fill="#00d0d8"/></svg>
<svg class="a" style="left:0;top:0" width="1000" height="748"><polygon points="700.56,241.80 706.64,241.80 707.25,242.41 705.65,244.00 701.55,244.00 699.95,242.41" fill="#ff0000"/><polygon points="708.40,243.56 707.79,242.96 706.20,244.55 706.20,249.25 707.30,250.35 708.40,249.25" fill="#ff0000"/><polygon points="707.30,251.45 706.20,252.55 706.20,257.25 707.79,258.84 708.40,258.24 708.40,252.55" fill="#ff0000"/><polygon points="701.55,257.80 705.65,257.80 707.25,259.39 706.64,260.00 700.56,260.00 699.95,259.39" fill="#ff0000"/><polygon points="699.90,251.45 701.00,252.55 701.00,257.25 699.40,258.84 698.80,258.24 698.80,252.55" fill="#ff0000"/><polygon points="698.80,243.56 699.40,242.96 701.00,244.55 701.00,249.25 699.90,250.35 698.80,249.25" fill="#ff0000"/><polygon points="719.76,241.80 725.84,241.80 726.45,242.41 724.85,244.00 720.75,244.00 719.15,242.41" fill="#ff0000"/><polygon points="727.60,243.56 727.00,242.96 725.40,244.55 725.40,249.25 726.50,250.35 727.60,249.25" fill="#ff0000"/><polygon points="726.50,251.45 725.40,252.55 725.40,257.25 727.00,258.84 727.60,258.24 727.60,252.55" fill="#ff0000"/><polygon points="720.75,257.80 724.85,257.80 726.45,259.39 725.84,260.00 719.76,260.00 719.15,259.39" fill="#ff0000"/><polygon points="719.10,251.45 720.20,252.55 720.20,257.25 718.61,258.84 718.00,258.24 718.00,252.55" fill="#ff0000"/><polygon points="718.00,243.56 718.61,242.96 720.20,244.55 720.20,249.25 719.10,250.35 718.00,249.25" fill="#ff0000"/><polygon points="731.36,241.80 737.44,241.80 738.05,242.41 736.45,244.00 732.35,244.00 730.75,242.41" fill="#ff0000"/><polygon points="739.20,243.56 738.60,242.96 737.00,244.55 737.00,249.25 738.10,250.35 739.20,249.25" fill="#ff0000"/><polygon points="738.10,251.45 737.00,252.55 737.00,257.25 738.60,258.84 739.20,258.24 739.20,252.55" fill="#ff0000"/><polygon points="732.35,257.80 736.45,257.80 738.05,259.39 737.44,260.00 731.36,260.00 730.75,259.39" fill="#ff0000"/><polygon points="730.70,251.45 731.80,252.55 731.80,257.25 730.21,258.84 729.60,258.24 729.60,252.55" fill="#ff0000"/><polygon points="729.60,243.56 730.21,242.96 731.80,244.55 731.80,249.25 730.70,250.35 729.60,249.25" fill="#ff0000"/><rect x="712.7" y="256.9" width="3.0" height="3.0" rx="0.6000000000000001" fill="#ff0000"/></svg>
<div class="a" style="left:492px;top:270.5px;width:84px;height:28px;background:#cccccc;box-sizing:border-box;border-top:1px solid #fff;border-left:1px solid #fff;border-right:1px solid #404040;border-bottom:1px solid #404040;box-shadow:inset -1px -1px 0 #808080;"></div>
<div class="a t" style="left:492px;top:270.7px;width:84px;height:28px;line-height:28px;text-align:center;font-size:12px;color:#000">Angle To Max</div>
<div class="a" style="left:581.3px;top:270.5px;width:80.5px;height:28px;background:#cccccc;box-sizing:border-box;border-top:1px solid #fff;border-left:1px solid #fff;border-right:1px solid #404040;border-bottom:1px solid #404040;box-shadow:inset -1px -1px 0 #808080;"></div>
<div class="a t" style="left:581.3px;top:270.7px;width:80.5px;height:28px;line-height:28px;text-align:center;font-size:12.1px;color:#000">Clear Angle</div>
<div class="a" style="left:668px;top:270.5px;width:84px;height:28px;background:#cccccc;box-sizing:border-box;border-top:1px solid #fff;border-left:1px solid #fff;border-right:1px solid #404040;border-bottom:1px solid #404040;box-shadow:inset -1px -1px 0 #808080;"></div>
<div class="a t" style="left:668px;top:270.7px;width:84px;height:28px;line-height:28px;text-align:center;font-size:11.9px;color:#000">As Max</div>
<div class="a" style="left:758.7px;top:182px;width:236px;height:123.5px;box-sizing:border-box;border-top:1px solid #fff;border-left:1px solid #fff;border-right:1px solid #808080;border-bottom:1px solid #808080;"></div>
<div class="a" style="left:761.3px;top:186.3px;width:111px;height:39px;background:#cccccc;box-sizing:border-box;border-top:1px solid #fff;border-left:1px solid #fff;border-right:1px solid #404040;border-bottom:1px solid #404040;box-shadow:inset -1px -1px 0 #808080;"></div>
<div class="a t" style="left:761.3px;top:185.5px;width:111px;height:39px;line-height:39px;text-align:center;font-size:13.1px;color:#000">Impact</div>
<div class="a" style="left:883.8px;top:186.3px;width:109.5px;height:39px;background:#cccccc;box-sizing:border-box;border-top:1px solid #fff;border-left:1px solid #fff;border-right:1px solid #404040;border-bottom:1px solid #404040;box-shadow:inset -1px -1px 0 #808080;"></div>
<div class="a t" style="left:883.8px;top:186.5px;width:109.5px;height:39px;line-height:39px;text-align:center;font-size:12.3px;color:#000">Test Start</div>
<div class="a" style="left:761.4px;top:233.2px;width:12.4px;height:12.4px;background:#fff;box-sizing:border-box;border-top:1px solid #808080;border-left:1px solid #808080;border-right:1px solid #fff;border-bottom:1px solid #fff;box-shadow:inset 1px 1px 0 #404040;"></div>
<svg class="a" style="left:761.4px;top:233.2px" width="13" height="13"><path d="M2.8 6.2l2.2 2.6 4.6-5" fill="none" stroke="#000" stroke-width="1.9"/></svg>
<div class="a t" style="left:779px;top:234.2px;color:#111;font-size:12px">Auto Rise</div>
<div class="a" style="left:762px;top:262px;width:77px;height:36px;background:#cccccc;box-sizing:border-box;border-top:1px solid #fff;border-left:1px solid #fff;border-right:1px solid #404040;border-bottom:1px solid #404040;box-shadow:inset -1px -1px 0 #808080;"></div>
<div class="a t" style="left:762px;top:262.8px;width:77px;height:36px;line-height:36px;text-align:center;font-size:13.6px;color:#000">Rise</div>
<div class="a" style="left:840.8px;top:262px;width:71px;height:36px;background:#cccccc;box-sizing:border-box;border-top:1px solid #fff;border-left:1px solid #fff;border-right:1px solid #404040;border-bottom:1px solid #404040;box-shadow:inset -1px -1px 0 #808080;"></div>
<div class="a t" style="left:840.8px;top:262.8px;width:71px;height:36px;line-height:36px;text-align:center;font-size:13.6px;color:#000">Fall</div>
<div class="a" style="left:916.3px;top:262px;width:72.5px;height:36px;background:#cccccc;box-sizing:border-box;border-top:1px solid #fff;border-left:1px solid #fff;border-right:1px solid #404040;border-bottom:1px solid #404040;box-shadow:inset -1px -1px 0 #808080;"></div>
<div class="a t" style="left:916.3px;top:262.8px;width:72.5px;height:36px;line-height:36px;text-align:center;font-size:13.6px;color:#000">Dowel</div>
<div class="a" style="left:8px;top:340px;width:985.8px;height:329px;background:#e0e0e0;"></div>
<div class="a" style="left:8px;top:340px;width:985.8px;height:1px;background:#808080;"></div>
<div class="a" style="left:8px;top:340px;width:1px;height:329px;background:#808080;"></div>
<div class="a" style="left:992.8px;top:340px;width:1.2px;height:329px;background:#808080;"></div>
<div class="a" style="left:8px;top:668px;width:985.8px;height:1.2px;background:#404040;"></div>
<div class="a" style="left:9px;top:341px;width:983.8px;height:20px;background:linear-gradient(#ffffff 0%,#ffffff 18%,#f0f0f0 25%,#ececec 50%,#e2e2e2 62%,#dcdcdc 85%,#d4d4d4 100%);"></div>
<div class="a" style="left:9px;top:360.5px;width:983.8px;height:1.2px;background:#8a8a8a;"></div>
<div class="a" style="left:9px;top:361.7px;width:983.8px;height:184.5px;background:#fff;"></div>
<div class="a" style="left:9px;top:380.6px;width:983.8px;height:1px;background:#c4c4c4;"></div>
<div class="a" style="left:9px;top:401.6px;width:983.8px;height:1px;background:#c4c4c4;"></div>
<div class="a" style="left:9px;top:422.2px;width:983.8px;height:1px;background:#c4c4c4;"></div>
<div class="a" style="left:9px;top:442.8px;width:983.8px;height:1px;background:#c4c4c4;"></div>
<div class="a" style="left:9px;top:463.4px;width:983.8px;height:1px;background:#c4c4c4;"></div>
<div class="a" style="left:9px;top:484.0px;width:983.8px;height:1px;background:#c4c4c4;"></div>
<div class="a" style="left:9px;top:504.6px;width:983.8px;height:1px;background:#c4c4c4;"></div>
<div class="a" style="left:9px;top:525.2px;width:983.8px;height:1px;background:#c4c4c4;"></div>
<div class="a" style="left:9px;top:545.8px;width:983.8px;height:1px;background:#c4c4c4;"></div>
<div class="a" style="left:106.8px;top:341.5px;width:1.2px;height:19px;background:#8a8a8a;"></div>
<div class="a" style="left:108px;top:341.5px;width:1px;height:19px;background:#ffffff;"></div>
<div class="a" style="left:107.4px;top:361.7px;width:1px;height:185px;background:#c8c8c8;"></div>
<div class="a" style="left:158.8px;top:341.5px;width:1.2px;height:19px;background:#8a8a8a;"></div>
<div class="a" style="left:160px;top:341.5px;width:1px;height:19px;background:#ffffff;"></div>
<div class="a" style="left:159.4px;top:361.7px;width:1px;height:185px;background:#c8c8c8;"></div>
<div class="a" style="left:212.3px;top:341.5px;width:1.2px;height:19px;background:#8a8a8a;"></div>
<div class="a" style="left:213.5px;top:341.5px;width:1px;height:19px;background:#ffffff;"></div>
<div class="a" style="left:212.9px;top:361.7px;width:1px;height:185px;background:#c8c8c8;"></div>
<div class="a" style="left:264.8px;top:341.5px;width:1.2px;height:19px;background:#8a8a8a;"></div>
<div class="a" style="left:266px;top:341.5px;width:1px;height:19px;background:#ffffff;"></div>
<div class="a" style="left:265.4px;top:361.7px;width:1px;height:185px;background:#c8c8c8;"></div>
<div class="a" style="left:317.8px;top:341.5px;width:1.2px;height:19px;background:#8a8a8a;"></div>
<div class="a" style="left:319px;top:341.5px;width:1px;height:19px;background:#ffffff;"></div>
<div class="a" style="left:318.4px;top:361.7px;width:1px;height:185px;background:#c8c8c8;"></div>
<div class="a" style="left:379.8px;top:341.5px;width:1.2px;height:19px;background:#8a8a8a;"></div>
<div class="a" style="left:381px;top:341.5px;width:1px;height:19px;background:#ffffff;"></div>
<div class="a" style="left:380.4px;top:361.7px;width:1px;height:185px;background:#c8c8c8;"></div>
<div class="a" style="left:441.8px;top:341.5px;width:1.2px;height:19px;background:#8a8a8a;"></div>
<div class="a" style="left:443px;top:341.5px;width:1px;height:19px;background:#ffffff;"></div>
<div class="a" style="left:442.4px;top:361.7px;width:1px;height:185px;background:#c8c8c8;"></div>
<div class="a" style="left:504.8px;top:341.5px;width:1.2px;height:19px;background:#8a8a8a;"></div>
<div class="a" style="left:506px;top:341.5px;width:1px;height:19px;background:#ffffff;"></div>
<div class="a" style="left:505.4px;top:361.7px;width:1px;height:185px;background:#c8c8c8;"></div>
<div class="a" style="left:567.3px;top:341.5px;width:1.2px;height:19px;background:#8a8a8a;"></div>
<div class="a" style="left:568.5px;top:341.5px;width:1px;height:19px;background:#ffffff;"></div>
<div class="a" style="left:567.9px;top:361.7px;width:1px;height:185px;background:#c8c8c8;"></div>
<div class="a" style="left:629.8px;top:341.5px;width:1.2px;height:19px;background:#8a8a8a;"></div>
<div class="a" style="left:631px;top:341.5px;width:1px;height:19px;background:#ffffff;"></div>
<div class="a" style="left:630.4px;top:361.7px;width:1px;height:185px;background:#c8c8c8;"></div>
<div class="a" style="left:692.3px;top:341.5px;width:1.2px;height:19px;background:#8a8a8a;"></div>
<div class="a" style="left:693.5px;top:341.5px;width:1px;height:19px;background:#ffffff;"></div>
<div class="a" style="left:692.9px;top:361.7px;width:1px;height:185px;background:#c8c8c8;"></div>
<div class="a" style="left:754.8px;top:341.5px;width:1.2px;height:19px;background:#8a8a8a;"></div>
<div class="a" style="left:756px;top:341.5px;width:1px;height:19px;background:#ffffff;"></div>
<div class="a" style="left:755.4px;top:361.7px;width:1px;height:185px;background:#c8c8c8;"></div>
<div class="a" style="left:817.3px;top:341.5px;width:1.2px;height:19px;background:#8a8a8a;"></div>
<div class="a" style="left:818.5px;top:341.5px;width:1px;height:19px;background:#ffffff;"></div>
<div class="a" style="left:817.9px;top:361.7px;width:1px;height:185px;background:#c8c8c8;"></div>
<div class="a" style="left:880.3px;top:341.5px;width:1.2px;height:19px;background:#8a8a8a;"></div>
<div class="a" style="left:881.5px;top:341.5px;width:1px;height:19px;background:#ffffff;"></div>
<div class="a" style="left:880.9px;top:361.7px;width:1px;height:185px;background:#c8c8c8;"></div>
<div class="a" style="left:942.8px;top:341.5px;width:1.2px;height:19px;background:#8a8a8a;"></div>
<div class="a" style="left:944px;top:341.5px;width:1px;height:19px;background:#ffffff;"></div>
<div class="a" style="left:943.4px;top:361.7px;width:1px;height:185px;background:#c8c8c8;"></div>
<div class="a t" style="left:110.6px;top:345.6px;color:#111;font-size:12.4px">Batch</div>
<div class="a t" style="left:162.6px;top:345.6px;color:#111;font-size:12.4px">Number</div>
<div class="a t" style="left:216.1px;top:345.6px;color:#111;font-size:12.4px">Toughn</div>
<div class="a t" style="left:268.6px;top:345.6px;color:#111;font-size:12.4px">Energy</div>
<div class="a t" style="left:321.6px;top:345.6px;color:#111;font-size:12.4px">Standard</div>
<div class="a t" style="left:383.6px;top:345.6px;color:#111;font-size:12.4px">Operator</div>
<div class="a t" style="left:445.6px;top:345.6px;color:#111;font-size:12.4px">Material</div>
<div class="a t" style="left:508.6px;top:345.6px;color:#111;font-size:12.4px">Temperat</div>
<div class="a t" style="left:571.1px;top:345.6px;color:#111;font-size:12.4px">Comment</div>
<div class="a t" style="left:633.6px;top:345.6px;color:#111;font-size:12.4px">Style</div>
<div class="a t" style="left:696.1px;top:345.6px;color:#111;font-size:12.4px">Deep</div>
<div class="a t" style="left:758.6px;top:345.6px;color:#111;font-size:12.4px">Area</div>
<div class="a t" style="left:821.1px;top:345.6px;color:#111;font-size:12.4px">Length</div>
<div class="a t" style="left:884.1px;top:345.6px;color:#111;font-size:12.4px">Width</div>
<div class="a t" style="left:946.6px;top:345.6px;color:#111;font-size:12.4px">Height</div>
<div class="a" style="left:8.6px;top:361.6px;width:98.5px;height:18.6px;box-sizing:border-box;border:1px dotted #333;"></div>
<div class="a" style="left:358.5px;top:360.5px;font-size:24.8px;color:rgba(105,105,105,0.6);white-space:pre;line-height:1.2;font-family:'Liberation Sans',sans-serif;text-shadow:1px 1px 0 rgba(255,255,255,0.5);">unitedtest.en.alibaba.com</div>
<div class="a" style="left:39.5px;top:653px;width:938.5px;height:15px;background-color:#f0f0f0;background-image:repeating-conic-gradient(#dcdcdc 0 25%,#f8f8f8 0 50%);background-size:2px 2px;"></div>
<div class="a" style="left:9px;top:653px;width:14.5px;height:15.2px;background:#cccccc;box-sizing:border-box;border-top:1px solid #fff;border-left:1px solid #fff;border-right:1px solid #404040;border-bottom:1px solid #404040;box-shadow:inset -1px -1px 0 #808080;"></div>
<div class="a" style="left:23.7px;top:653px;width:15.8px;height:15.2px;background:#cccccc;box-sizing:border-box;border-top:1px solid #fff;border-left:1px solid #fff;border-right:1px solid #404040;border-bottom:1px solid #404040;box-shadow:inset -1px -1px 0 #808080;"></div>
<div class="a" style="left:978px;top:653px;width:15px;height:15.2px;background:#cccccc;box-sizing:border-box;border-top:1px solid #fff;border-left:1px solid #fff;border-right:1px solid #404040;border-bottom:1px solid #404040;box-shadow:inset -1px -1px 0 #808080;"></div>
<svg class="a" style="left:0;top:0" width="1000" height="748"><path d="M13 660.5l4-3.8v7.6z" fill="#000"/><path d="M987.5 660.5l-4-3.8v7.6z" fill="#000"/></svg>
<div class="a" style="left:4.1px;top:677.4px;width:57.7px;height:58.2px;background:#cccccc;box-sizing:border-box;border-top:1px solid #fff;border-left:1px solid #fff;border-right:1px solid #404040;border-bottom:1px solid #404040;box-shadow:inset -1px -1px 0 #808080;"></div>
<div class="a" style="left:62.2px;top:677.4px;width:58.8px;height:58.2px;background:#cccccc;box-sizing:border-box;border-top:1px solid #fff;border-left:1px solid #fff;border-right:1px solid #404040;border-bottom:1px solid #404040;box-shadow:inset -1px -1px 0 #808080;"></div>
<div class="a" style="left:123.8px;top:677.4px;width:58.8px;height:58.2px;background:#cccccc;box-sizing:border-box;border-top:1px solid #fff;border-left:1px solid #fff;border-right:1px solid #404040;border-bottom:1px solid #404040;box-shadow:inset -1px -1px 0 #808080;"></div>
<div class="a" style="left:184.2px;top:677.4px;width:58.8px;height:58.2px;background:#cccccc;box-sizing:border-box;border-top:1px solid #fff;border-left:1px solid #fff;border-right:1px solid #404040;border-bottom:1px solid #404040;box-shadow:inset -1px -1px 0 #808080;"></div>
<div class="a" style="left:244.6px;top:677.4px;width:59px;height:58.2px;background:#cccccc;box-sizing:border-box;border-top:1px solid #fff;border-left:1px solid #fff;border-right:1px solid #404040;border-bottom:1px solid #404040;box-shadow:inset -1px -1px 0 #808080;"></div>
<div class="a" style="left:305.8px;top:677.4px;width:58.6px;height:58.2px;background:#cccccc;box-sizing:border-box;border-top:1px solid #fff;border-left:1px solid #fff;border-right:1px solid #404040;border-bottom:1px solid #404040;box-shadow:inset -1px -1px 0 #808080;"></div>
<div class="a" style="left:366.6px;top:677.4px;width:59.2px;height:58.2px;background:#cccccc;box-sizing:border-box;border-top:1px solid #fff;border-left:1px solid #fff;border-right:1px solid #404040;border-bottom:1px solid #404040;box-shadow:inset -1px -1px 0 #808080;"></div>
<div class="a" style="left:427.8px;top:677.4px;width:58.8px;height:58.2px;background:#cccccc;box-sizing:border-box;border-top:1px solid #fff;border-left:1px solid #fff;border-right:1px solid #404040;border-bottom:1px solid #404040;box-shadow:inset -1px -1px 0 #808080;"></div>
<div class="a" style="left:489.4px;top:677.4px;width:58.4px;height:58.2px;background:#cccccc;box-sizing:border-box;border-top:1px solid #fff;border-left:1px solid #fff;border-right:1px solid #404040;border-bottom:1px solid #404040;box-shadow:inset -1px -1px 0 #808080;"></div>
<div class="a" style="left:551.8px;top:677.4px;width:58.8px;height:58.2px;background:#cccccc;box-sizing:border-box;border-top:1px solid #fff;border-left:1px solid #fff;border-right:1px solid #404040;border-bottom:1px solid #404040;box-shadow:inset -1px -1px 0 #808080;"></div>
<div class="a" style="left:939px;top:677.4px;width:58.5px;height:58.2px;background:#cccccc;box-sizing:border-box;border-top:1px solid #fff;border-left:1px solid #fff;border-right:1px solid #404040;border-bottom:1px solid #404040;box-shadow:inset -1px -1px 0 #808080;"></div>
<svg class="a" style="left:0;top:0" width="1000" height="748"><defs>
<linearGradient id="un" x1="0" y1="0" x2="0" y2="1">
<stop offset="0" stop-color="#f6f6f6"/><stop offset="0.18" stop-color="#e4e4e4"/><stop offset="0.19" stop-color="#b8dcf8"/><stop offset="0.42" stop-color="#8cb8ec"/><stop offset="0.43" stop-color="#3c6cd8"/><stop offset="1" stop-color="#3060cc"/></linearGradient>
<linearGradient id="flop" x1="0" y1="0" x2="1" y2="1"><stop offset="0" stop-color="#f4f4f4"/><stop offset="1" stop-color="#c4c4c4"/></linearGradient>
<linearGradient id="gold" x1="0" y1="0" x2="1" y2="1"><stop offset="0" stop-color="#ffe070"/><stop offset="0.5" stop-color="#f8a830"/><stop offset="1" stop-color="#ffd050"/></linearGradient>
<linearGradient id="silv" x1="0" y1="0" x2="1" y2="0"><stop offset="0" stop-color="#ffffff"/><stop offset="0.6" stop-color="#c8c8c8"/><stop offset="1" stop-color="#808080"/></linearGradient>
<pattern id="hatch" width="3" height="2.2" patternUnits="userSpaceOnUse" patternTransform="rotate(-25)"><rect width="3" height="2.2" fill="#d4d4d4"/><rect width="3" height="0.9" fill="#8a8a8a"/></pattern>
</defs><g>
<rect x="15.7" y="688.2" width="35.6" height="37" fill="#000"/>
<rect x="17.5" y="689.9" width="10.6" height="5.2" fill="#00ffff"/>
<rect x="29.2" y="689.9" width="21.8" height="5.2" fill="#00ffff"/>
<rect x="17.5" y="696.8" width="10.6" height="5.4" fill="#00ffff"/>
<rect x="17.5" y="704" width="10.6" height="5.7" fill="#00ffff"/>
<rect x="17.5" y="722.9" width="10.6" height="2.3" fill="#00ffff"/>
<rect x="29.2" y="696.8" width="21.8" height="28.4" fill="#ffff00"/>
<path d="M31 711 L31 705 L33 705 L33 702.5 L36 702.5 L36 700.5 L39.5 700.5 L39.5 699.4 L46 699.4 L46 700.5 L49 700.5 L49 701 L51 701 L51 711 Z" fill="#00ff00" stroke="#000" stroke-width="0.8"/>
<rect x="33" y="711.4" width="18" height="2.3" fill="#000"/>
<rect x="33" y="716.3" width="18" height="1.7" fill="#000"/>
<path d="M17.5 704 L17.5 722 L38.5 722.5 Z" fill="#00ff00" stroke="#000" stroke-width="0.9"/>
<path d="M21 712.5 L21 718.5 L27 718.5 Z" fill="#000"/>
</g><g>
<clipPath id="unc"><rect x="71.2" y="686.2" width="41.1" height="41.1" rx="3"/></clipPath>
<rect x="71.2" y="686.2" width="41.1" height="41.1" rx="3" fill="url(#un)"/>
<g clip-path="url(#unc)">
<ellipse cx="91.5" cy="723" rx="15.5" ry="8.5" fill="#40a4dc"/>
<path d="M81 728 L81 722 Q81 719.2 84 719.2 L99 719.2 Q102.2 719.2 102.2 722 L102.2 728 Z" fill="#70a0d4"/>
</g>
<path d="M86 717.5 A12.5 12.5 0 0 1 88 694.5" fill="none" stroke="#ffffff" stroke-width="2.8" stroke-dasharray="2.2 0.6"/>
<path d="M98.8 717.5 A12.5 12.5 0 0 0 96.8 694.5" fill="none" stroke="#ffffff" stroke-width="2.8" stroke-dasharray="2.2 0.6"/>
<circle cx="92.4" cy="705.8" r="8.6" fill="#88b4ec" stroke="#ffffff" stroke-width="1.4"/>
<path d="M92.4 697.2 V714.4 M83.8 705.8 H101 M87 699.5 Q92.4 702.5 97.8 699.5 M87 712 Q92.4 709 97.8 712 M92.4 697.2 Q86 705.8 92.4 714.4 M92.4 697.2 Q98.8 705.8 92.4 714.4" stroke="#ffffff" stroke-width="0.9" fill="none"/>
<path d="M86.5 703.5 l3.5 -2.5 l3 1.5 l3.5 -1 l2.5 3 l-2.5 2.8 l-3.5 -1 l-2.5 2.2 l-3 -1.5 z" fill="#ffffff"/>
<path d="M89 717 L92.4 719.5 L95.8 717" fill="none" stroke="#ffffff" stroke-width="1"/>
</g><g>
<rect x="145.9" y="702.2" width="19" height="15.2" fill="#c8c8c8" stroke="#000" stroke-width="0.6"/>
<rect x="147" y="703.5" width="17" height="2.3" fill="#0000e0"/>
<rect x="147.5" y="706" width="16" height="10.5" fill="#e8eef0"/>
<rect x="155.3" y="709.3" width="2.2" height="6.4" fill="#ff2020"/>
<rect x="159.3" y="707.5" width="2.1" height="7.4" fill="#a020a0"/>
<rect x="145.9" y="716.2" width="19" height="1.4" fill="#000"/>
<path d="M143.5 693 L147 693.5 Q152 691.8 156 692.5 Q160.5 694 160.3 698.5 Q158 695.8 155.5 696.5 L153 699 L149.5 699 L147 696.5 L143.5 697.5 Z" fill="#d0d0d0" stroke="#000" stroke-width="0.8"/>
<rect x="150.2" y="699" width="2.5" height="6.3" fill="#a0a0a0" stroke="#000" stroke-width="0.4"/>
<rect x="148.4" y="704.8" width="5.3" height="17.2" rx="1.5" fill="#e0d860" stroke="#505000" stroke-width="0.6"/>
<rect x="149.5" y="706" width="1.2" height="15" fill="#f8f4a0"/>
</g><g>
<path d="M200.8 694 Q200.8 693 201.8 693 L225 693 L228 696 L228 719 Q228 720 227 720 L201.8 720 Q200.8 720 200.8 719 Z" fill="#3a3a3a"/>
<path d="M202 694.2 L224.5 694.2" stroke="#707070" stroke-width="0.8"/>
<rect x="206.8" y="693" width="15.4" height="8.2" fill="url(#flop)"/>
<rect x="216" y="695" width="3.1" height="4.8" fill="#000"/>
<rect x="204.2" y="704.6" width="20.2" height="14.2" fill="url(#flop)"/>
<rect x="204.2" y="717.8" width="20.2" height="1" fill="#202070"/>
</g><g>
<path d="M262.4 717.4 L262.4 696 Q262.4 695.1 263.5 695.1 L269.5 695.1 L271 697.2 L282 697.2 Q283 697.2 283 698.3 L283 713 Z" fill="#f8d878" stroke="#c08040" stroke-width="0.6"/>
<path d="M263 702 L270 702 L272 699.8 L282.5 699.8" fill="none" stroke="#fff8b0" stroke-width="0.8"/>
<path d="M263.3 717.4 L266.7 704.1 L272 704.1 L274 702 L288.1 700.3 L283 713.1 Z" fill="#fff090" stroke="#a07020" stroke-width="0.7"/>
<path d="M265 716 L268 705.5 L287 701.5" fill="none" stroke="#ffffff" stroke-width="0.7"/>
</g><g>
<path d="M323.4 690 L348.7 690 L354.9 696.2 L354.9 722.4 L323.4 722.4 Z" fill="#ffffff" stroke="#000" stroke-width="0.8"/>
<path d="M323.4 690 L323.4 722.4" stroke="#909090" stroke-width="1"/>
<path d="M348.7 690 L348.7 696.2 L354.9 696.2" fill="#f0f0f0" stroke="#808080" stroke-width="0.7"/>
<rect x="339.1" y="694" width="9.4" height="11.3" fill="#c0c0c0"/>
<path d="M340.5 697 l3 3 l3 -2 M341 702 l5 -1" stroke="#f8f8f8" stroke-width="0.8" fill="none"/>
<path d="M337 708 H349 M337 710.9 H349 M327 714 H349 M340 717 H349" stroke="#909090" stroke-width="1" stroke-dasharray="1 1"/>
<path d="M336 697 V705" stroke="#909090" stroke-width="1" stroke-dasharray="1 1.5"/>
<rect x="316" y="692" width="18" height="18.5" fill="#ffffff" stroke="#10108a" stroke-width="2.6"/>
<path d="M317.2 696.5 L320 696.5 L321.8 705 L323.8 698 L326.2 698 L328 705 L329.8 696.5 L332.6 696.5 L329.5 708 L327 708 L325 701 L323 708 L320.5 708 Z" fill="#10108a"/>
</g><g>
<path d="M385.1 689 L406.5 689 L415.9 698.4 L415.9 722.9 L385.1 722.9 Z" fill="#ffffff" stroke="#000" stroke-width="0.8"/>
<path d="M415.9 698.4 L415.9 722.9 L385.1 722.9" fill="none" stroke="#202020" stroke-width="1.3"/>
<path d="M406.5 689 L406.5 698.4 L415.9 698.4" fill="#f4f4f4" stroke="#606060" stroke-width="0.7"/>
<path d="M388 699 H412 M388 703.5 H412 M388 708 H412 M388 713 H412 M388 718.5 H412 M394 699 V718.5 M400 699 V718.5 M406 699 V718.5" stroke="#b8b8b8" stroke-width="0.8"/>
<rect x="401" y="711" width="2" height="7" fill="#a0a0a0"/><rect x="405" y="709" width="2" height="9" fill="#a0a0a0"/>
<rect x="378.3" y="692.3" width="18.5" height="18" fill="#ffffff" stroke="#006400" stroke-width="2.5"/>
<path d="M380.2 695 L385 695 L387.5 698.5 L390 695 L394.8 695 L390 701 L395 707.5 L390 707.5 L387.5 704 L385 707.5 L380.2 707.5 L385 701 Z" fill="#006400"/>
<path d="M381 696 L391 706.5" stroke="#ffffff" stroke-width="0.6"/>
</g><g><circle cx="458" cy="706.5" r="18.8" fill="#101860"/><circle cx="458" cy="706.5" r="17.8" fill="#2c50d8"/><circle cx="458" cy="706.5" r="15.6" fill="#10184a"/><circle cx="458" cy="706.5" r="14.8" fill="#404040"/><text x="463.90" y="698.28" font-size="5" font-weight="bold" fill="#c8c8c8" font-family="Liberation Sans" text-anchor="middle">1</text><text x="468.22" y="702.60" font-size="5" font-weight="bold" fill="#c8c8c8" font-family="Liberation Sans" text-anchor="middle">2</text><text x="469.80" y="708.50" font-size="5" font-weight="bold" fill="#c8c8c8" font-family="Liberation Sans" text-anchor="middle">3</text><text x="468.22" y="714.40" font-size="5" font-weight="bold" fill="#c8c8c8" font-family="Liberation Sans" text-anchor="middle">4</text><text x="463.90" y="718.72" font-size="5" font-weight="bold" fill="#c8c8c8" font-family="Liberation Sans" text-anchor="middle">5</text><text x="458.00" y="720.30" font-size="5" font-weight="bold" fill="#c8c8c8" font-family="Liberation Sans" text-anchor="middle">6</text><text x="452.10" y="718.72" font-size="5" font-weight="bold" fill="#c8c8c8" font-family="Liberation Sans" text-anchor="middle">7</text><text x="447.78" y="714.40" font-size="5" font-weight="bold" fill="#c8c8c8" font-family="Liberation Sans" text-anchor="middle">8</text><text x="446.20" y="708.50" font-size="5" font-weight="bold" fill="#c8c8c8" font-family="Liberation Sans" text-anchor="middle">9</text><text x="447.78" y="702.60" font-size="5" font-weight="bold" fill="#c8c8c8" font-family="Liberation Sans" text-anchor="middle">10</text><text x="452.10" y="698.28" font-size="5" font-weight="bold" fill="#c8c8c8" font-family="Liberation Sans" text-anchor="middle">11</text><text x="458.00" y="696.70" font-size="5" font-weight="bold" fill="#c8c8c8" font-family="Liberation Sans" text-anchor="middle">12</text><path d="M458 706.5 L449.4 700.6 M458 706.5 L468.4 700.6" stroke="#ffffff" stroke-width="1.4"/><path d="M458 697 V716" stroke="#8a8a8a" stroke-width="0.8"/></g><g>
<path d="M502 718 L522 699" stroke="#909090" stroke-width="5" stroke-linecap="round"/>
<path d="M502 718 L522 699" stroke="#e0e0e0" stroke-width="2" stroke-linecap="round"/>
<mask id="wm"><rect x="515" y="680" width="35" height="30" fill="#fff"/><circle cx="533" cy="693.5" r="4.2" fill="#000"/><path d="M530 690.5 L539 681.5 L545 687.5 L536 696.5 Z" fill="#000"/></mask>
<g mask="url(#wm)"><circle cx="531.5" cy="695" r="8.5" fill="url(#silv)" stroke="#707070" stroke-width="0.8"/></g>
<path d="M516 710 L538 725" stroke="#a0a0a0" stroke-width="3.5" stroke-linecap="round"/>
<path d="M516 710 L538 725" stroke="#e8e8e8" stroke-width="1.2"/>
<path d="M500.5 690 L513 701" stroke="#000" stroke-width="6.5" stroke-linecap="round"/>
<path d="M501 692.5 L511.5 702 M503 690 L513.5 699.5" stroke="#606060" stroke-width="0.7"/>
<circle cx="519" cy="707" r="9.6" fill="#f4f4f4" stroke="#b0b0b0" stroke-width="0.8"/>
<rect x="512.3" y="704.1" width="13.5" height="6.1" fill="#40c040"/>
<rect x="516.8" y="700" width="4.5" height="14.1" fill="#40c040"/>
<rect x="512.8" y="706.2" width="12.5" height="1.5" fill="#90e890"/>
</g><g>
<ellipse cx="576.5" cy="691.8" rx="12" ry="5.6" fill="none" stroke="#6a6a7a" stroke-width="2.4"/>
<ellipse cx="576.5" cy="691.4" rx="12" ry="5.6" fill="none" stroke="#a8c0e8" stroke-width="1"/>
<path d="M563 696 Q563 693.2 566 693.2 L571.5 693.2 Q573.6 693.6 573.6 696 L573.6 707 Q573.6 709.2 571.5 709.2 L566 709.2 Q563 709.2 563 707 Z" fill="url(#silv)" stroke="#505050" stroke-width="0.8"/>
<path d="M573.4 707.5 L582.4 707.5 L582.6 727 Q578.5 730 574.8 727.8 L573.8 724.5 L572.2 723.5 L573.8 721.5 L572.2 719.5 L573.8 717.5 L572.2 715.5 L573.8 713.5 Z" fill="url(#silv)" stroke="#505050" stroke-width="0.8"/>
<path d="M571.3 692.5 L586.5 685.6 Q589.5 686.5 590 690 L590.5 703.5 L574 709.2 Q571 708 571 705 Z M576.3 696 L583.8 692.8 L585 700.2 L577.6 703.4 Z" fill="url(#gold)" fill-rule="evenodd" stroke="#a05000" stroke-width="0.8"/>
<path d="M576.8 698 Q581 700.5 585 697.5" fill="none" stroke="#6a6a8a" stroke-width="2"/>
<path d="M584.5 703.5 L590.3 701.3 L601 721.5 Q600 725 596 724.5 L594 720.5 L592 721 L591.6 717.6 L589.6 718 L589.2 714.6 L587.2 715 Z" fill="url(#gold)" stroke="#a05000" stroke-width="0.8"/>
<path d="M573 694 L585.5 688.5" stroke="#fff4b0" stroke-width="1"/>
</g><g>
<rect x="955" y="692.1" width="2.3" height="22" fill="#909090"/>
<rect x="957.1" y="692.1" width="15.5" height="22.3" fill="#8a8a8a" stroke="#000" stroke-width="0.8"/>
<path d="M952 715.5 H966 M970 715.5 H984" stroke="#000" stroke-width="1"/>
<rect x="952" y="716.5" width="32" height="5" fill="url(#hatch)"/>
<path d="M957.4 692.3 L965.2 697.9 L965.2 721.5 L957.4 716.5 Z" fill="#009a9a" stroke="#000" stroke-width="0.8"/>
<path d="M963.6 697 L963.6 720.5" stroke="#20e8e8" stroke-width="1.8"/>
<path d="M958.2 693.5 L964.4 698" stroke="#20e8e8" stroke-width="0.8"/>
<circle cx="961" cy="707.6" r="1.1" fill="#ffffff" stroke="#000" stroke-width="0.4"/>
<path d="M967.3 703.2 L974.9 696.4 L974.9 701 L982.5 701 Q983.8 703.2 982.5 705.5 L974.9 705.5 L974.9 710.9 Z" fill="#10e0e8" stroke="#000" stroke-width="0.8"/>
<path d="M970 703 L981 702.6" stroke="#c0ffff" stroke-width="0.9"/>
</g></svg>
</body></html>
